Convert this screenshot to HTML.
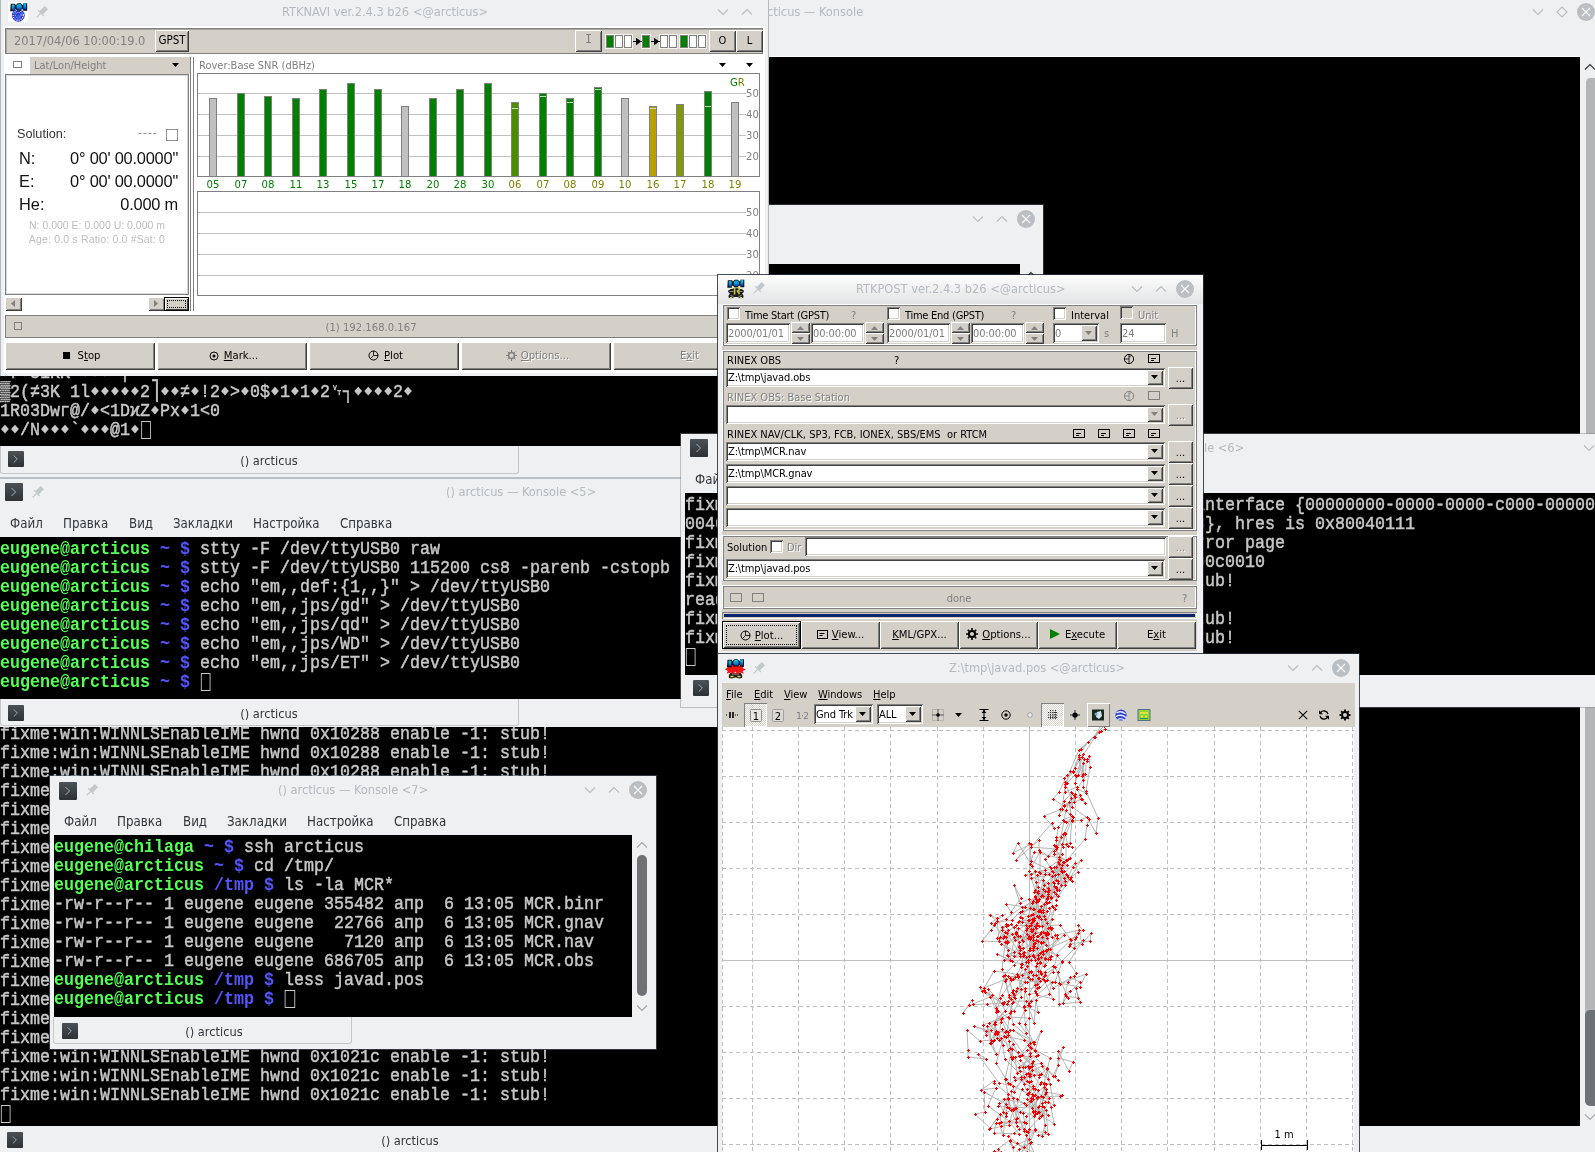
<!DOCTYPE html>
<html lang="ru"><head><meta charset="utf-8"><title>desktop</title>
<style>
*{box-sizing:border-box;margin:0;padding:0}
html,body{width:1595px;height:1152px;overflow:hidden;background:#eff0f1}
body{position:relative;opacity:.9999;font-family:"DejaVu Sans","Liberation Sans",sans-serif;font-size:13px;color:#232629}
.a{position:absolute}
.win{position:absolute;background:#eff0f1;overflow:hidden}
.kt{position:absolute;font:12.7px "DejaVu Sans Condensed","DejaVu Sans","Liberation Sans",sans-serif;font-stretch:condensed;color:#b5bbc0;white-space:nowrap}
.menu{position:absolute;font:13.2px "DejaVu Sans Condensed","DejaVu Sans","Liberation Sans",sans-serif;font-stretch:condensed;color:#31363b;white-space:nowrap}
.menu span{position:absolute;top:0}
.tabtxt{position:absolute;font:12.7px "DejaVu Sans Condensed","DejaVu Sans","Liberation Sans",sans-serif;font-stretch:condensed;color:#31363b;white-space:nowrap}
.term{position:absolute;background:#000;overflow:hidden}
.term pre{position:absolute;left:0;top:0;font:19px/19px "Liberation Mono","DejaVu Sans Mono",monospace;color:#c8c8c8;transform:scaleX(.8771);transform-origin:0 0;-webkit-text-stroke:.5px;white-space:pre}
.term pre b{font-weight:bold;-webkit-text-stroke:0}
.q{display:inline-block;width:11.4px;text-align:center;font:15px/10px "DejaVu Sans Mono","DejaVu Sans",monospace;-webkit-text-stroke:0;vertical-align:0px;overflow:hidden;height:12px}
.g{color:#54ff54}.bl{color:#5454ff}
.cur{display:inline-block;width:11.4px;height:18px;border:1.2px solid #c8c8c8;vertical-align:-4px;margin-left:1px}
.w{font:11px "DejaVu Sans Condensed","DejaVu Sans","Liberation Sans",sans-serif;font-stretch:condensed;color:#000;white-space:pre}
.face{background:#d4d0c8}
.raised{background:#d4d0c8;box-shadow:inset 1px 1px 0 #fff,inset -1px -1px 0 #404040,inset 2px 2px 0 #d4d0c8,inset -2px -2px 0 #808080}
.sunken{background:#fff;box-shadow:inset 1px 1px 0 #808080,inset -1px -1px 0 #fff,inset 2px 2px 0 #404040,inset -2px -2px 0 #d4d0c8}
.pnl{background:#d4d0c8;box-shadow:inset 1px 1px 0 #808080,inset -1px -1px 0 #fff}
.btn{position:absolute;text-align:center}
.dis{color:#808080;text-shadow:1px 1px 0 #fff}
u{text-decoration:underline;text-underline-offset:1px}
svg{position:absolute;overflow:visible}
</style></head><body>
<svg width="0" height="0" style="position:absolute"><defs>
<linearGradient id="cy" x1="0" y1="0" x2="0" y2="1"><stop offset="0" stop-color="#08c4f4"/><stop offset=".55" stop-color="#0a8fe0"/><stop offset="1" stop-color="#0a2fb0"/></linearGradient>
</defs></svg>

<div class="win" style="left:0;top:0;width:1595px;height:479px">
<div class="kt" style="left:743px;top:4px">() arcticus — Konsole</div>
<svg class="a" style="left:1532px;top:6px" width="12" height="12"><path d="M1 3.5 L6 8.5 L11 3.5" fill="none" stroke="#b8bec3" stroke-width="1.1"/></svg><svg class="a" style="left:1556px;top:6px" width="12" height="12"><path d="M6 1 L11 6 L6 11 L1 6 Z" fill="none" stroke="#b8bec3" stroke-width="1.1"/></svg><svg class="a" style="left:1577px;top:3px" width="18" height="18"><circle cx="9" cy="9" r="9" fill="#b9bfc3"/><path d="M5 5 L13 13 M13 5 L5 13" stroke="#fcfcfc" stroke-width="1.2" fill="none"/></svg>
<div class="a" style="left:0;top:56px;width:1580px;height:1px;background:#fff"></div>
<div class="term" style="left:0px;top:57px;width:1580px;height:389px;"><pre style="top:3px;left:0px">
















<span class="q">◆</span>r<span class="q">◆</span>51RK <span class="q">◆</span><span class="q">◆</span><span class="q">◆</span> ¦
▒2(≠3K 1l<span class="q">◆</span><span class="q">◆</span><span class="q">◆</span><span class="q">◆</span><span class="q">◆</span>2⎤<span class="q">◆</span><span class="q">◆</span>≠<span class="q">◆</span>!2<span class="q">◆</span>&gt;<span class="q">◆</span>0$<span class="q">◆</span>1<span class="q">◆</span>1<span class="q">◆</span>2␋┐<span class="q">◆</span><span class="q">◆</span><span class="q">◆</span><span class="q">◆</span>2<span class="q">◆</span>
1R03Dwг@/<span class="q">◆</span>&lt;1DϰZ<span class="q">◆</span>Px<span class="q">◆</span>1&lt;0
<span class="q">◆</span><span class="q">◆</span>/N<span class="q">◆</span><span class="q">◆</span><span class="q">◆</span>`<span class="q">◆</span><span class="q">◆</span><span class="q">◆</span>@1<span class="q">◆</span><span class="cur"></span></pre></div>
<div class="a" style="left:1580px;top:57px;width:15px;height:389px;background:#eff0f1"></div>
<svg class="a" style="left:1584px;top:61px" width="12" height="12"><path d="M1 8.5 L6 3.5 L11 8.5" fill="none" stroke="#31363b" stroke-width="1.2"/></svg>
<div class="a" style="left:1586px;top:78px;width:9px;height:368px;border-radius:4.5px 0 0 4.5px;background:#b4b5b6"></div>
<div class="a" style="left:0;top:446px;width:519px;height:28px;border:1px solid #c3c7ca;border-top:none;border-radius:0 0 3px 3px"></div>
<svg class="a" style="left:8px;top:451px" width="16" height="16" viewBox="0 0 18 18"><defs><linearGradient id="kg8_451" x1="0" y1="0" x2="0" y2="1"><stop offset="0" stop-color="#4a5258"/><stop offset="1" stop-color="#2c3236"/></linearGradient></defs><rect width="18" height="18" rx="1" fill="url(#kg8_451)"/><path d="M6.5 5 L10.5 9 L6.5 13" fill="none" stroke="#aab3b7" stroke-width="1"/></svg>
<div class="tabtxt" style="left:169px;top:453px;width:200px;text-align:center">() arcticus</div>
</div>
<div class="win" style="left:0;top:640px;width:1595px;height:512px">
<div class="term" style="left:0px;top:63px;width:1580px;height:423px;"><pre style="top:3px;left:0px">fixme:win:WINNLSEnableIME hwnd 0x10288 enable -1: stub!
fixme:win:WINNLSEnableIME hwnd 0x10288 enable -1: stub!
fixme:win:WINNLSEnableIME hwnd 0x10288 enable -1: stub!
fixme:win:WINNLSEnableIME hwnd 0x10288 enable -1: stub!
fixme:win:WINNLSEnableIME hwnd 0x10288 enable -1: stub!
fixme:win:WINNLSEnableIME hwnd 0x10288 enable -1: stub!
fixme:win:WINNLSEnableIME hwnd 0x10288 enable -1: stub!
fixme:win:WINNLSEnableIME hwnd 0x10288 enable -1: stub!
fixme:win:WINNLSEnableIME hwnd 0x10288 enable -1: stub!
fixme:win:WINNLSEnableIME hwnd 0x10288 enable -1: stub!
fixme:win:WINNLSEnableIME hwnd 0x10288 enable -1: stub!
fixme:win:WINNLSEnableIME hwnd 0x10288 enable -1: stub!
fixme:win:WINNLSEnableIME hwnd 0x10288 enable -1: stub!
fixme:win:WINNLSEnableIME hwnd 0x10288 enable -1: stub!
fixme:win:WINNLSEnableIME hwnd 0x10288 enable -1: stub!
fixme:win:WINNLSEnableIME hwnd 0x10288 enable -1: stub!
fixme:win:WINNLSEnableIME hwnd 0x10288 enable -1: stub!
fixme:win:WINNLSEnableIME hwnd 0x10288 enable -1: stub!
fixme:win:WINNLSEnableIME hwnd 0x1021c enable -1: stub!
fixme:win:WINNLSEnableIME hwnd 0x1021c enable -1: stub!
fixme:win:WINNLSEnableIME hwnd 0x1021c enable -1: stub!
<span class="cur"></span></pre></div>
<div class="a" style="left:1585px;top:63px;width:10px;height:380px;background:#b4b5b6"></div>
<div class="a" style="left:1585px;top:370px;width:10px;height:96px;border-radius:5px 0 0 5px;background:#6e7276"></div>
<svg class="a" style="left:1584px;top:471px" width="12" height="12"><path d="M1 3.5 L6 8.5 L11 3.5" fill="none" stroke="#a9adb0" stroke-width="1.2"/></svg>
<div class="a" style="left:-1px;top:486px;width:822px;height:30px;border:1px solid #c3c7ca;border-top:none"></div>
<svg class="a" style="left:7px;top:492px" width="16" height="16" viewBox="0 0 18 18"><defs><linearGradient id="kg7_492" x1="0" y1="0" x2="0" y2="1"><stop offset="0" stop-color="#4a5258"/><stop offset="1" stop-color="#2c3236"/></linearGradient></defs><rect width="18" height="18" rx="1" fill="url(#kg7_492)"/><path d="M6.5 5 L10.5 9 L6.5 13" fill="none" stroke="#aab3b7" stroke-width="1"/></svg>
<div class="tabtxt" style="left:310px;top:493px;width:200px;text-align:center">() arcticus</div>
</div>
<div class="win" style="left:0;top:477px;width:1040px;height:250px">
<div class="a" style="left:0;top:0;width:1040px;height:2px;background:#b8c0c6"></div>
<svg class="a" style="left:5px;top:6px" width="18" height="18" viewBox="0 0 18 18"><defs><linearGradient id="kg5_6" x1="0" y1="0" x2="0" y2="1"><stop offset="0" stop-color="#4a5258"/><stop offset="1" stop-color="#2c3236"/></linearGradient></defs><rect width="18" height="18" rx="1" fill="url(#kg5_6)"/><path d="M6.5 5 L10.5 9 L6.5 13" fill="none" stroke="#aab3b7" stroke-width="1"/></svg><svg class="a" style="left:29px;top:6px" width="18" height="18" viewBox="-9 -9 18 18"><g transform="rotate(45)" fill="#c3c8cb"><rect x="-2.3" y="-6.2" width="4.6" height="7.4"/><rect x="-4.1" y=".9" width="8.2" height="1.2"/><rect x="-.55" y="2" width="1.1" height="5.6"/></g></svg>
<div class="kt" style="left:446px;top:7px">() arcticus — Konsole &lt;5&gt;</div>
<div class="menu" style="left:0;top:39px"><span style="left:10px">Файл</span><span style="left:63px">Правка</span><span style="left:129px">Вид</span><span style="left:173px">Закладки</span><span style="left:253px">Настройка</span><span style="left:340px">Справка</span></div>
<div class="term" style="left:0px;top:60px;width:1025px;height:162px;"><pre style="top:3px;left:0px"><b class="g">eugene@arcticus</b> <b class="bl">~ $</b> stty -F /dev/ttyUSB0 raw
<b class="g">eugene@arcticus</b> <b class="bl">~ $</b> stty -F /dev/ttyUSB0 115200 cs8 -parenb -cstopb
<b class="g">eugene@arcticus</b> <b class="bl">~ $</b> echo "em,,def:{1,,}" &gt; /dev/ttyUSB0
<b class="g">eugene@arcticus</b> <b class="bl">~ $</b> echo "em,,jps/gd" &gt; /dev/ttyUSB0
<b class="g">eugene@arcticus</b> <b class="bl">~ $</b> echo "em,,jps/qd" &gt; /dev/ttyUSB0
<b class="g">eugene@arcticus</b> <b class="bl">~ $</b> echo "em,,jps/WD" &gt; /dev/ttyUSB0
<b class="g">eugene@arcticus</b> <b class="bl">~ $</b> echo "em,,jps/ET" &gt; /dev/ttyUSB0
<b class="g">eugene@arcticus</b> <b class="bl">~ $</b> <span class="cur"></span></pre></div>
<div class="a" style="left:0;top:222px;width:519px;height:27px;border:1px solid #c3c7ca;border-top:none;border-radius:0 0 3px 3px"></div>
<svg class="a" style="left:8px;top:228px" width="16" height="16" viewBox="0 0 18 18"><defs><linearGradient id="kg8_228" x1="0" y1="0" x2="0" y2="1"><stop offset="0" stop-color="#4a5258"/><stop offset="1" stop-color="#2c3236"/></linearGradient></defs><rect width="18" height="18" rx="1" fill="url(#kg8_228)"/><path d="M6.5 5 L10.5 9 L6.5 13" fill="none" stroke="#aab3b7" stroke-width="1"/></svg>
<div class="tabtxt" style="left:169px;top:229px;width:200px;text-align:center">() arcticus</div>
</div>
<div class="win" style="left:681px;top:434px;width:960px;height:273px;box-shadow:0 0 0 1px rgba(120,130,140,.45)">
<svg class="a" style="left:9px;top:5px" width="18" height="18" viewBox="0 0 18 18"><defs><linearGradient id="kg9_5" x1="0" y1="0" x2="0" y2="1"><stop offset="0" stop-color="#4a5258"/><stop offset="1" stop-color="#2c3236"/></linearGradient></defs><rect width="18" height="18" rx="1" fill="url(#kg9_5)"/><path d="M6.5 5 L10.5 9 L6.5 13" fill="none" stroke="#aab3b7" stroke-width="1"/></svg>
<div class="kt" style="left:413px;top:6px">() arcticus — Konsole &lt;6&gt;</div>
<svg class="a" style="left:902px;top:8px" width="12" height="12"><path d="M1 3.5 L6 8.5 L11 3.5" fill="none" stroke="#b8bec3" stroke-width="1.1"/></svg>
<div class="menu" style="left:0;top:38px"><span style="left:14px">Файл</span><span style="left:67px">Правка</span></div>
<div class="term" style="left:4px;top:59px;width:956px;height:182px;"><pre style="top:3px;left:0px">fixme:ole:CoCreateInstance no instance created for interface {00000000-0000-0000-c000-00000000
0046} of class {25336920-03f9-11cf-8fd0-00aa00686f13}, hres is 0x80040111
fixme:mshtml:nsChannel_OnStopRequest unsupported: error page
fixme:imm:ImmReleaseContext (0x10288, 0x157cc0): 0x00c0010
fixme:win:WINNLSEnableIME hwnd 0x10288 enable -1: stub!
readobs : rinex obs files ok
fixme:win:WINNLSEnableIME hwnd 0x10288 enable -1: stub!
fixme:win:WINNLSEnableIME hwnd 0x10288 enable -1: stub!
<span class="cur"></span></pre></div>
<svg class="a" style="left:12px;top:246px" width="16" height="16" viewBox="0 0 18 18"><defs><linearGradient id="kg12_246" x1="0" y1="0" x2="0" y2="1"><stop offset="0" stop-color="#4a5258"/><stop offset="1" stop-color="#2c3236"/></linearGradient></defs><rect width="18" height="18" rx="1" fill="url(#kg12_246)"/><path d="M6.5 5 L10.5 9 L6.5 13" fill="none" stroke="#aab3b7" stroke-width="1"/></svg>
</div>
<div class="win" style="left:600px;top:205px;width:443px;height:120px;box-shadow:0 0 0 1px rgba(120,130,140,.35)">
<svg class="a" style="left:372px;top:8px" width="12" height="12"><path d="M1 3.5 L6 8.5 L11 3.5" fill="none" stroke="#b8bec3" stroke-width="1.1"/></svg><svg class="a" style="left:396px;top:8px" width="12" height="12"><path d="M1 8.5 L6 3.5 L11 8.5" fill="none" stroke="#b8bec3" stroke-width="1.1"/></svg><svg class="a" style="left:417px;top:5px" width="18" height="18"><circle cx="9" cy="9" r="9" fill="#b9bfc3"/><path d="M5 5 L13 13 M13 5 L5 13" stroke="#fcfcfc" stroke-width="1.2" fill="none"/></svg>
<div class="a" style="left:0;top:59px;width:420px;height:70px;background:#000"></div>
<svg class="a" style="left:425px;top:64px" width="12" height="12"><path d="M1 8.5 L6 3.5 L11 8.5" fill="none" stroke="#31363b" stroke-width="1.2"/></svg>
</div>
<div class="win" style="left:0;top:0;width:769px;height:376px">
<div class="a" style="left:4px;top:26px;width:761px;height:347px;background:#fff"></div>
<div class="a" style="left:0;top:0;width:1px;height:376px;background:#b3bbc2"></div>
<div class="a" style="left:768px;top:0;width:1px;height:376px;background:#b3bbc2"></div>
<svg class="a" style="left:8px;top:2px" width="20" height="20" viewBox="0 0 20 20"><rect width="20" height="20" fill="#fefefe"/>
<circle cx="10.3" cy="13.3" r="6.4" fill="#2a34c8"/><circle cx="10.3" cy="13.3" r="5" fill="none" stroke="#e9ecff" stroke-width="1.5" stroke-dasharray="1 1.1"/><circle cx="10.3" cy="13.3" r="2.8" fill="none" stroke="#dfe4ff" stroke-width="1" stroke-dasharray="1 1"/>
<circle cx="6.5" cy="11" r="1.3" fill="#2f6bff"/><circle cx="14" cy="11" r="1.3" fill="#2f6bff"/><circle cx="10.5" cy="14" r="1.5" fill="#2f6bff"/><circle cx="7.3" cy="17" r="1.2" fill="#2f6bff"/>
<g transform="translate(2.2 .3)"><path d="M.5 1.5 h4.5 v1 h1 l1.5-1.5 h3 l1.5 1.5 h1 v-1.5 h4 v7.5 h-4 v-1.5 h-1.5 l-1 1.5 h-3.5 l-1-1.5 h-1.5 v2 h-4.5z" fill="#0b140c"/><rect x="1.5" y="2.3" width="2.8" height="5.6" rx="1" fill="url(#cy)"/><ellipse cx="9" cy="4.6" rx="2.7" ry="3" fill="url(#cy)"/><rect x="13.2" y="1" width="2.8" height="6.2" rx="1" fill="url(#cy)"/></g></svg>
<svg class="a" style="left:33px;top:3px" width="18" height="18" viewBox="-9 -9 18 18"><g transform="rotate(45)" fill="#c3c8cb"><rect x="-2.3" y="-6.2" width="4.6" height="7.4"/><rect x="-4.1" y=".9" width="8.2" height="1.2"/><rect x="-.55" y="2" width="1.1" height="5.6"/></g></svg>
<div class="kt" style="left:282px;top:4px">RTKNAVI ver.2.4.3 b26 &lt;@arcticus&gt;</div>
<svg class="a" style="left:717px;top:6px" width="12" height="12"><path d="M1 3.5 L6 8.5 L11 3.5" fill="none" stroke="#b8bec3" stroke-width="1.1"/></svg><svg class="a" style="left:741px;top:6px" width="12" height="12"><path d="M1 8.5 L6 3.5 L11 8.5" fill="none" stroke="#b8bec3" stroke-width="1.1"/></svg>
<div class="a face" style="left:5px;top:28px;width:758px;height:26px;border:1px solid #808080;box-shadow:inset 1px 1px 0 #a9a6a0"></div>
<div class="a w" style="left:14px;top:34px;font-size:11.4px;font-stretch:normal;font-family:'DejaVu Sans',sans-serif;color:#808080">2017/04/06 10:00:19.0</div>
<div class="btn raised w" style="left:155px;top:30px;width:34px;height:22px;line-height:21px;font-size:11.5px">GPST</div>
<div class="btn raised w" style="left:575px;top:30px;width:27px;height:22px;line-height:21px;color:#808080;font-family:'Liberation Mono',monospace;font-size:12px">I</div>
<div class="btn raised w" style="left:709px;top:30px;width:27px;height:22px;line-height:21px">O</div>
<div class="btn raised w" style="left:736px;top:30px;width:27px;height:22px;line-height:21px">L</div>
<div class="a" style="left:606px;top:35px;width:8px;height:13px;background:#008000;border:1px solid #808080;box-shadow:0 0 0 1px #f4f3f0"></div>
<div class="a" style="left:615px;top:35px;width:8px;height:13px;background:#fff;border:1px solid #808080;box-shadow:0 0 0 1px #f4f3f0"></div>
<div class="a" style="left:624px;top:35px;width:8px;height:13px;background:#fff;border:1px solid #808080;box-shadow:0 0 0 1px #f4f3f0"></div>
<div class="a" style="left:642px;top:35px;width:8px;height:13px;background:#008000;border:1px solid #808080;box-shadow:0 0 0 1px #f4f3f0"></div>
<div class="a" style="left:660px;top:35px;width:8px;height:13px;background:#fff;border:1px solid #808080;box-shadow:0 0 0 1px #f4f3f0"></div>
<div class="a" style="left:669px;top:35px;width:8px;height:13px;background:#fff;border:1px solid #808080;box-shadow:0 0 0 1px #f4f3f0"></div>
<div class="a" style="left:680px;top:35px;width:8px;height:13px;background:#008000;border:1px solid #808080;box-shadow:0 0 0 1px #f4f3f0"></div>
<div class="a" style="left:689px;top:35px;width:8px;height:13px;background:#fff;border:1px solid #808080;box-shadow:0 0 0 1px #f4f3f0"></div>
<div class="a" style="left:698px;top:35px;width:8px;height:13px;background:#fff;border:1px solid #808080;box-shadow:0 0 0 1px #f4f3f0"></div>
<svg class="a" style="left:633px;top:37px" width="9" height="9"><path d="M0 4.5 H9 M3.5 1.5 L7.5 4.5 L3.5 7.5 Z" stroke="#000" stroke-width="1" fill="#000"/></svg>
<svg class="a" style="left:651px;top:37px" width="9" height="9"><path d="M0 4.5 H9 M3.5 1.5 L7.5 4.5 L3.5 7.5 Z" stroke="#000" stroke-width="1" fill="#000"/></svg>
<svg class="a" style="left:13px;top:61px" width="10" height="8"><rect x=".5" y=".5" width="8" height="6" fill="none" stroke="#000" stroke-dasharray="1 1"/></svg>
<div class="a face" style="left:30px;top:57px;width:160px;height:17px"></div>
<div class="a w" style="left:34px;top:59px;font-size:11px;color:#808080">Lat/Lon/Height</div>
<svg class="a" style="left:172px;top:63px" width="7" height="4"><path d="M0 0 H7 L3.5 4 Z" fill="#000"/></svg>
<div class="a" style="left:5px;top:74px;width:184px;height:221px;background:#fff;border:1px solid #808080;box-shadow:inset 0 0 0 1px #d8d8d8"></div>
<div class="a" style="left:17px;top:127px;font-family:'Liberation Sans',sans-serif;font-size:12.7px;color:#333;white-space:nowrap">Solution:</div>
<div class="a" style="left:138px;top:126px;font-family:'Liberation Sans',sans-serif;font-size:12.7px;color:#909090;white-space:nowrap;letter-spacing:.6px">----</div>
<div class="a" style="left:166px;top:129px;width:12px;height:12px;border:1px solid #909090;background:#fff"></div>
<div class="a" style="left:19px;top:149px;font-family:'Liberation Sans',sans-serif;font-size:16.4px;color:#111;white-space:nowrap">N:</div>
<div class="a" style="left:40px;width:138px;text-align:right;top:149px;font-family:'Liberation Sans',sans-serif;font-size:16.4px;letter-spacing:-.22px;color:#111;white-space:nowrap">0° 00' 00.0000"</div>
<div class="a" style="left:19px;top:172px;font-family:'Liberation Sans',sans-serif;font-size:16.4px;color:#111;white-space:nowrap">E:</div>
<div class="a" style="left:40px;width:138px;text-align:right;top:172px;font-family:'Liberation Sans',sans-serif;font-size:16.4px;letter-spacing:-.22px;color:#111;white-space:nowrap">0° 00' 00.0000"</div>
<div class="a" style="left:19px;top:195px;font-family:'Liberation Sans',sans-serif;font-size:16.4px;color:#111;white-space:nowrap">He:</div>
<div class="a" style="left:40px;width:138px;text-align:right;top:195px;font-family:'Liberation Sans',sans-serif;font-size:16.4px;letter-spacing:-.22px;color:#111;white-space:nowrap">0.000 m</div>
<div class="a" style="left:5px;width:184px;text-align:center;top:219px;font-family:'Liberation Sans',sans-serif;font-size:10.5px;color:#bdbdbd;white-space:nowrap">N: 0.000 E: 0.000 U: 0.000 m</div>
<div class="a" style="left:5px;width:184px;text-align:center;top:233px;font-family:'Liberation Sans',sans-serif;font-size:10.5px;color:#bdbdbd;white-space:nowrap;letter-spacing:.17px">Age: 0.0 s Ratio: 0.0 #Sat: 0</div>
<div class="a raised" style="left:5px;top:297px;width:17px;height:14px"></div><svg class="a" style="left:11px;top:300px" width="4" height="7"><path d="M4 0 V7 L0 3.5 Z" fill="#808080"/></svg>
<div class="a raised" style="left:148px;top:297px;width:17px;height:14px"></div><svg class="a" style="left:154px;top:300px" width="4" height="7"><path d="M0 0 V7 L4 3.5 Z" fill="#808080"/></svg>
<div class="a face" style="left:164px;top:297px;width:25px;height:14px;border:1px solid #000;box-shadow:inset 1px 1px 0 #fff,inset -1px -1px 0 #404040"></div><div class="a" style="left:167px;top:300px;width:19px;height:8px;border:1px dotted #000"></div>
<div class="a" style="left:190px;top:57px;width:1px;height:254px;background:#808080"></div><div class="a" style="left:193px;top:57px;width:1px;height:254px;background:#808080"></div>
<div class="a w" style="left:199px;top:59px;color:#808080;font-size:11px">Rover:Base SNR (dBHz)</div>
<svg class="a" style="left:719px;top:63px" width="7" height="4"><path d="M0 0 H7 L3.5 4 Z" fill="#000"/></svg>
<svg class="a" style="left:746px;top:63px" width="7" height="4"><path d="M0 0 H7 L3.5 4 Z" fill="#000"/></svg>
<div class="a" style="left:197px;top:73px;width:563px;height:104px;background:#fff;border:1px solid #808080"></div>
<svg class="a" style="left:0;top:0" width="768" height="376" viewBox="0 0 768 376" shape-rendering="crispEdges"><path d="M198 93.5 H746" stroke="#c0c0c0" stroke-width="1"/><path d="M198 114.5 H746" stroke="#c0c0c0" stroke-width="1"/><path d="M198 135.5 H746" stroke="#c0c0c0" stroke-width="1"/><path d="M198 156.5 H746" stroke="#c0c0c0" stroke-width="1"/><path d="M198 212.5 H746" stroke="#c0c0c0" stroke-width="1"/><path d="M198 233.5 H746" stroke="#c0c0c0" stroke-width="1"/><path d="M198 254.5 H746" stroke="#c0c0c0" stroke-width="1"/><path d="M198 275.5 H746" stroke="#c0c0c0" stroke-width="1"/><rect x="209.5" y="98.5" width="7" height="78" fill="#c0c0c0" stroke="#808080" stroke-width="1"/><rect x="237.5" y="93.5" width="7" height="83" fill="#008000" stroke="#808080" stroke-width="1"/><rect x="264.5" y="96.5" width="7" height="80" fill="#008000" stroke="#808080" stroke-width="1"/><rect x="292.5" y="98.5" width="7" height="78" fill="#008000" stroke="#808080" stroke-width="1"/><rect x="319.5" y="89.5" width="7" height="87" fill="#008000" stroke="#808080" stroke-width="1"/><rect x="347.5" y="83.5" width="7" height="93" fill="#008000" stroke="#808080" stroke-width="1"/><rect x="374.5" y="89.5" width="7" height="87" fill="#008000" stroke="#808080" stroke-width="1"/><rect x="401.5" y="106.5" width="7" height="70" fill="#c0c0c0" stroke="#808080" stroke-width="1"/><rect x="429.5" y="98.5" width="7" height="78" fill="#008000" stroke="#808080" stroke-width="1"/><rect x="456.5" y="89.5" width="7" height="87" fill="#008000" stroke="#808080" stroke-width="1"/><rect x="484.5" y="83.5" width="7" height="93" fill="#008000" stroke="#808080" stroke-width="1"/><rect x="511.5" y="102.5" width="7" height="74" fill="#4c8c00" stroke="#808080" stroke-width="1"/><path d="M512 108.5 H518" stroke="#c8d8c0" stroke-width="1"/><rect x="539.5" y="93.5" width="7" height="83" fill="#008000" stroke="#808080" stroke-width="1"/><path d="M540 96.5 H546" stroke="#c8d8c0" stroke-width="1"/><rect x="566.5" y="98.5" width="7" height="78" fill="#008000" stroke="#808080" stroke-width="1"/><path d="M567 102.5 H573" stroke="#c8d8c0" stroke-width="1"/><rect x="594.5" y="87.5" width="7" height="89" fill="#008000" stroke="#808080" stroke-width="1"/><path d="M595 89.5 H601" stroke="#c8d8c0" stroke-width="1"/><rect x="621.5" y="98.5" width="7" height="78" fill="#c0c0c0" stroke="#808080" stroke-width="1"/><rect x="649.5" y="106.5" width="7" height="70" fill="#b8a000" stroke="#808080" stroke-width="1"/><path d="M650 108.5 H656" stroke="#c8d8c0" stroke-width="1"/><rect x="676.5" y="104.5" width="7" height="72" fill="#80980a" stroke="#808080" stroke-width="1"/><rect x="704.5" y="91.5" width="7" height="85" fill="#008000" stroke="#808080" stroke-width="1"/><path d="M705 106.5 H711" stroke="#c8d8c0" stroke-width="1"/><rect x="731.5" y="102.5" width="7" height="74" fill="#c0c0c0" stroke="#808080" stroke-width="1"/></svg>
<div class="a w" style="left:201px;top:178px;width:24px;text-align:center;color:#008000;font-size:11.2px">05</div><div class="a w" style="left:229px;top:178px;width:24px;text-align:center;color:#008000;font-size:11.2px">07</div><div class="a w" style="left:256px;top:178px;width:24px;text-align:center;color:#008000;font-size:11.2px">08</div><div class="a w" style="left:284px;top:178px;width:24px;text-align:center;color:#008000;font-size:11.2px">11</div><div class="a w" style="left:311px;top:178px;width:24px;text-align:center;color:#008000;font-size:11.2px">13</div><div class="a w" style="left:339px;top:178px;width:24px;text-align:center;color:#008000;font-size:11.2px">15</div><div class="a w" style="left:366px;top:178px;width:24px;text-align:center;color:#008000;font-size:11.2px">17</div><div class="a w" style="left:393px;top:178px;width:24px;text-align:center;color:#008000;font-size:11.2px">18</div><div class="a w" style="left:421px;top:178px;width:24px;text-align:center;color:#008000;font-size:11.2px">20</div><div class="a w" style="left:448px;top:178px;width:24px;text-align:center;color:#008000;font-size:11.2px">28</div><div class="a w" style="left:476px;top:178px;width:24px;text-align:center;color:#008000;font-size:11.2px">30</div><div class="a w" style="left:503px;top:178px;width:24px;text-align:center;color:#808000;font-size:11.2px">06</div><div class="a w" style="left:531px;top:178px;width:24px;text-align:center;color:#808000;font-size:11.2px">07</div><div class="a w" style="left:558px;top:178px;width:24px;text-align:center;color:#808000;font-size:11.2px">08</div><div class="a w" style="left:586px;top:178px;width:24px;text-align:center;color:#808000;font-size:11.2px">09</div><div class="a w" style="left:613px;top:178px;width:24px;text-align:center;color:#808000;font-size:11.2px">10</div><div class="a w" style="left:641px;top:178px;width:24px;text-align:center;color:#808000;font-size:11.2px">16</div><div class="a w" style="left:668px;top:178px;width:24px;text-align:center;color:#808000;font-size:11.2px">17</div><div class="a w" style="left:696px;top:178px;width:24px;text-align:center;color:#808000;font-size:11.2px">18</div><div class="a w" style="left:723px;top:178px;width:24px;text-align:center;color:#808000;font-size:11.2px">19</div>
<div class="a w" style="left:730px;top:76px;font-size:11.2px"><span style="color:#008000">G</span><span style="color:#808000">R</span></div>
<div class="a w" style="left:746px;top:88px;height:12px;line-height:12px;color:#808080;font-size:11.2px;background:#fff">50</div>
<div class="a w" style="left:746px;top:109px;height:12px;line-height:12px;color:#808080;font-size:11.2px;background:#fff">40</div>
<div class="a w" style="left:746px;top:130px;height:12px;line-height:12px;color:#808080;font-size:11.2px;background:#fff">30</div>
<div class="a w" style="left:746px;top:151px;height:12px;line-height:12px;color:#808080;font-size:11.2px;background:#fff">20</div>
<div class="a" style="left:197px;top:191px;width:563px;height:105px;border:1px solid #808080"></div>
<div class="a w" style="left:746px;top:207px;height:12px;line-height:12px;color:#808080;font-size:11.2px;background:#fff">50</div>
<div class="a w" style="left:746px;top:228px;height:12px;line-height:12px;color:#808080;font-size:11.2px;background:#fff">40</div>
<div class="a w" style="left:746px;top:249px;height:12px;line-height:12px;color:#808080;font-size:11.2px;background:#fff">30</div>
<div class="a w" style="left:746px;top:270px;height:12px;line-height:12px;color:#808080;font-size:11.2px;background:#fff">20</div>
<div class="a face" style="left:5px;top:315px;width:758px;height:23px;border:1px solid #808080"></div>
<div class="a" style="left:14px;top:322px;width:8px;height:8px;border:1px solid #808080"></div>
<div class="a w" style="left:271px;top:321px;width:200px;text-align:center;color:#808080;font-size:11.2px">(1) 192.168.0.167</div>
<div class="btn raised w" style="left:5px;top:342px;width:150px;height:28px;line-height:28px;font-size:11.2px;padding-left:3px"><span style="display:inline-block;width:7px;height:7px;background:#000;margin-right:8px"></span>S<u>t</u>op</div>
<div class="btn raised w" style="left:157px;top:342px;width:150px;height:28px;line-height:28px;font-size:11.2px;padding-left:3px"><svg style="position:static;vertical-align:-2px;margin-right:5px" width="10" height="10"><circle cx="5" cy="5" r="4" fill="none" stroke="#000"/><circle cx="5" cy="5" r="1.5"/></svg><u>M</u>ark...</div>
<div class="btn raised w" style="left:309px;top:342px;width:150px;height:28px;line-height:28px;font-size:11.2px;padding-left:3px"><svg style="position:static;vertical-align:-2px;margin-right:5px" width="11" height="11"><circle cx="5.5" cy="5.5" r="4.5" fill="none" stroke="#000"/><path d="M5.5 1 V5.5 H10 M5.5 5.5 L2.5 8.5" stroke="#000" fill="none" stroke-width=".8"/></svg><u>P</u>lot</div>
<div class="btn raised w dis" style="left:461px;top:342px;width:150px;height:28px;line-height:28px;font-size:11.2px;padding-left:3px"><svg style="position:static;vertical-align:-2px;margin-right:4px" width="11" height="11"><circle cx="5.5" cy="5.5" r="3" fill="none" stroke="#808080" stroke-width="1.6" /><path d="M5.5 0 V11 M0 5.5 H11 M1.6 1.6 L9.4 9.4 M9.4 1.6 L1.6 9.4" stroke="#808080" stroke-width="1" stroke-dasharray="2 7"/></svg><u>O</u>ptions...</div>
<div class="btn raised w dis" style="left:613px;top:342px;width:150px;height:28px;line-height:28px;font-size:11.2px;padding-left:3px">E<u>x</u>it</div>
</div>
<div class="win" style="left:50px;top:776px;width:606px;height:273px;box-shadow:0 0 0 1px rgba(90,100,110,.55)">
<svg class="a" style="left:9px;top:6px" width="18" height="18" viewBox="0 0 18 18"><defs><linearGradient id="kg9_6" x1="0" y1="0" x2="0" y2="1"><stop offset="0" stop-color="#4a5258"/><stop offset="1" stop-color="#2c3236"/></linearGradient></defs><rect width="18" height="18" rx="1" fill="url(#kg9_6)"/><path d="M6.5 5 L10.5 9 L6.5 13" fill="none" stroke="#aab3b7" stroke-width="1"/></svg><svg class="a" style="left:33px;top:5px" width="18" height="18" viewBox="-9 -9 18 18"><g transform="rotate(45)" fill="#c3c8cb"><rect x="-2.3" y="-6.2" width="4.6" height="7.4"/><rect x="-4.1" y=".9" width="8.2" height="1.2"/><rect x="-.55" y="2" width="1.1" height="5.6"/></g></svg>
<div class="kt" style="left:228px;top:6px">() arcticus — Konsole &lt;7&gt;</div>
<svg class="a" style="left:534px;top:8px" width="12" height="12"><path d="M1 3.5 L6 8.5 L11 3.5" fill="none" stroke="#b8bec3" stroke-width="1.1"/></svg><svg class="a" style="left:558px;top:8px" width="12" height="12"><path d="M1 8.5 L6 3.5 L11 8.5" fill="none" stroke="#b8bec3" stroke-width="1.1"/></svg><svg class="a" style="left:579px;top:5px" width="18" height="18"><circle cx="9" cy="9" r="9" fill="#b9bfc3"/><path d="M5 5 L13 13 M13 5 L5 13" stroke="#fcfcfc" stroke-width="1.2" fill="none"/></svg>
<div class="menu" style="left:0;top:38px"><span style="left:14px">Файл</span><span style="left:67px">Правка</span><span style="left:133px">Вид</span><span style="left:177px">Закладки</span><span style="left:257px">Настройка</span><span style="left:344px">Справка</span></div>
<div class="term" style="left:4px;top:59px;width:578px;height:182px;"><pre style="top:3px;left:0px"><b class="g">eugene@chilaga</b> <b class="bl">~ $</b> ssh arcticus
<b class="g">eugene@arcticus</b> <b class="bl">~ $</b> cd /tmp/
<b class="g">eugene@arcticus</b> <b class="bl">/tmp $</b> ls -la MCR*
-rw-r--r-- 1 eugene eugene 355482 апр  6 13:05 MCR.binr
-rw-r--r-- 1 eugene eugene  22766 апр  6 13:05 MCR.gnav
-rw-r--r-- 1 eugene eugene   7120 апр  6 13:05 MCR.nav
-rw-r--r-- 1 eugene eugene 686705 апр  6 13:05 MCR.obs
<b class="g">eugene@arcticus</b> <b class="bl">/tmp $</b> less javad.pos
<b class="g">eugene@arcticus</b> <b class="bl">/tmp $</b> <span class="cur"></span></pre></div>
<svg class="a" style="left:586px;top:63px" width="12" height="12"><path d="M1 8.5 L6 3.5 L11 8.5" fill="none" stroke="#a4a9ad" stroke-width="1.2"/></svg>
<div class="a" style="left:587px;top:79px;width:10px;height:141px;border-radius:5px;background:#6e7276"></div>
<svg class="a" style="left:586px;top:226px" width="12" height="12"><path d="M1 3.5 L6 8.5 L11 3.5" fill="none" stroke="#a4a9ad" stroke-width="1.2"/></svg>
<div class="a" style="left:3px;top:241px;width:299px;height:27px;border:1px solid #c3c7ca;border-top:none;border-radius:0 0 3px 3px"></div>
<svg class="a" style="left:12px;top:247px" width="16" height="16" viewBox="0 0 18 18"><defs><linearGradient id="kg12_247" x1="0" y1="0" x2="0" y2="1"><stop offset="0" stop-color="#4a5258"/><stop offset="1" stop-color="#2c3236"/></linearGradient></defs><rect width="18" height="18" rx="1" fill="url(#kg12_247)"/><path d="M6.5 5 L10.5 9 L6.5 13" fill="none" stroke="#aab3b7" stroke-width="1"/></svg>
<div class="tabtxt" style="left:64px;top:248px;width:200px;text-align:center">() arcticus</div>
</div>
<div class="win" style="left:718px;top:275px;width:485px;height:379px;box-shadow:0 0 0 1px rgba(35,45,55,.85)">
<div class="a" style="left:0;top:0;width:485px;height:29px;background:linear-gradient(#fdfdfd,#e2e3e4)"></div>
<svg class="a" style="left:9px;top:3px" width="18" height="21" viewBox="0 0 18 21">
<path d="M1 13 q1-2.5 4-2 l2-1 h4 l2 1 q3-.5 4 2 q-.5 2-2 2.5 q2 1.5 1.5 4 q-3 1.5-6-.5 h-3 q-3 2-6 .5 q-.5-2.500 1.500-4 q-1.500-.5-2-2.500z" fill="#1c1e1a"/>
<path d="M2.500 13.500 h4 M11.500 13.500 h4 M3.500 17.500 l3 1 M11.500 18.500 l3-1" stroke="#8a8a86" stroke-width="1.200"/>
<path d="M7 9.500 h3.500 q1.800 .2 1.800 1.800 q0 1.500-1.800 1.700 l2 3 M7.600 9.500 v7" fill="none" stroke="#d6cc3a" stroke-width="1.500"/>
<path d="M3 19.500 h2 M13 19.500 h2 M2 11.500 h1 M15 11 h1" stroke="#e6dc30" stroke-width="1.200"/>
<g transform="translate(.3 .8)"><path d="M.5 1.5 h4.5 v1 h1 l1.5-1.5 h3 l1.5 1.5 h1 v-1.5 h4 v7.5 h-4 v-1.5 h-1.5 l-1 1.5 h-3.5 l-1-1.5 h-1.5 v2 h-4.5z" fill="#0b140c"/><rect x="1.5" y="2.3" width="2.8" height="5.6" rx="1" fill="url(#cy)"/><ellipse cx="9" cy="4.6" rx="2.7" ry="3" fill="url(#cy)"/><rect x="13.2" y="1" width="2.8" height="6.2" rx="1" fill="url(#cy)"/></g></svg>
<svg class="a" style="left:32px;top:4px" width="18" height="18" viewBox="-9 -9 18 18"><g transform="rotate(45)" fill="#c3c8cb"><rect x="-2.3" y="-6.2" width="4.6" height="7.4"/><rect x="-4.1" y=".9" width="8.2" height="1.2"/><rect x="-.55" y="2" width="1.1" height="5.6"/></g></svg>
<div class="kt" style="left:138px;top:6px">RTKPOST ver.2.4.3 b26 &lt;@arcticus&gt;</div>
<svg class="a" style="left:413px;top:8px" width="12" height="12"><path d="M1 3.5 L6 8.5 L11 3.5" fill="none" stroke="#b8bec3" stroke-width="1.1"/></svg><svg class="a" style="left:437px;top:8px" width="12" height="12"><path d="M1 8.5 L6 3.5 L11 8.5" fill="none" stroke="#b8bec3" stroke-width="1.1"/></svg><svg class="a" style="left:458px;top:5px" width="18" height="18"><circle cx="9" cy="9" r="9" fill="#b9bfc3"/><path d="M5 5 L13 13 M13 5 L5 13" stroke="#fcfcfc" stroke-width="1.2" fill="none"/></svg>
<div class="a face" style="left:4px;top:29px;width:475px;height:347px"></div>
<div class="a face" style="left:4px;top:29px;width:475px;height:42px;box-shadow:inset 1px 1px 0 #fff,inset -1px -1px 0 #808080,inset 2px 2px 0 #808080,inset -2px -2px 0 #fff;"></div><div class="a face" style="left:4px;top:75px;width:475px;height:181px;box-shadow:inset 1px 1px 0 #fff,inset -1px -1px 0 #808080,inset 2px 2px 0 #808080,inset -2px -2px 0 #fff;"></div><div class="a face" style="left:4px;top:260px;width:475px;height:46px;box-shadow:inset 1px 1px 0 #fff,inset -1px -1px 0 #808080,inset 2px 2px 0 #808080,inset -2px -2px 0 #fff;"></div><div class="a face" style="left:4px;top:310px;width:475px;height:24px;box-shadow:inset 1px 1px 0 #fff,inset -1px -1px 0 #808080,inset 2px 2px 0 #808080,inset -2px -2px 0 #fff;"></div>
<div class="a sunken" style="left:9px;top:32px;width:13px;height:13px;background:#fff"></div><div class="a w " style="left:27px;top:34px;letter-spacing:-.25px">Time Start (GPST)</div><div class="a w " style="left:133px;top:34px;color:#808080">?</div>
<div class="a sunken w" style="left:8px;top:48px;width:64px;height:20px;line-height:21px;padding-left:2px;letter-spacing:-.12px;color:#808080;overflow:hidden">2000/01/01</div><div class="a raised" style="left:73px;top:47px;width:19px;height:11px"></div><div class="a raised" style="left:73px;top:58px;width:19px;height:11px"></div><svg class="a" style="left:79px;top:51px" width="7" height="4"><path d="M0 4 H7 L3.5 0 Z" fill="#808080"/></svg><svg class="a" style="left:79px;top:62px" width="7" height="4"><path d="M0 0 H7 L3.5 4 Z" fill="#808080"/></svg><div class="a sunken w" style="left:93px;top:48px;width:53px;height:20px;line-height:21px;padding-left:2px;letter-spacing:-.12px;color:#808080;overflow:hidden">00:00:00</div><div class="a raised" style="left:147px;top:47px;width:19px;height:11px"></div><div class="a raised" style="left:147px;top:58px;width:19px;height:11px"></div><svg class="a" style="left:153px;top:51px" width="7" height="4"><path d="M0 4 H7 L3.5 0 Z" fill="#808080"/></svg><svg class="a" style="left:153px;top:62px" width="7" height="4"><path d="M0 0 H7 L3.5 4 Z" fill="#808080"/></svg>
<div class="a sunken" style="left:169px;top:32px;width:13px;height:13px;background:#fff"></div><div class="a w " style="left:187px;top:34px;letter-spacing:-.25px">Time End (GPST)</div><div class="a w " style="left:293px;top:34px;color:#808080">?</div>
<div class="a sunken w" style="left:169px;top:48px;width:63px;height:20px;line-height:21px;padding-left:2px;letter-spacing:-.12px;color:#808080;overflow:hidden">2000/01/01</div><div class="a raised" style="left:233px;top:47px;width:19px;height:11px"></div><div class="a raised" style="left:233px;top:58px;width:19px;height:11px"></div><svg class="a" style="left:239px;top:51px" width="7" height="4"><path d="M0 4 H7 L3.5 0 Z" fill="#808080"/></svg><svg class="a" style="left:239px;top:62px" width="7" height="4"><path d="M0 0 H7 L3.5 4 Z" fill="#808080"/></svg><div class="a sunken w" style="left:253px;top:48px;width:53px;height:20px;line-height:21px;padding-left:2px;letter-spacing:-.12px;color:#808080;overflow:hidden">00:00:00</div><div class="a raised" style="left:307px;top:47px;width:19px;height:11px"></div><div class="a raised" style="left:307px;top:58px;width:19px;height:11px"></div><svg class="a" style="left:313px;top:51px" width="7" height="4"><path d="M0 4 H7 L3.5 0 Z" fill="#808080"/></svg><svg class="a" style="left:313px;top:62px" width="7" height="4"><path d="M0 0 H7 L3.5 4 Z" fill="#808080"/></svg>
<div class="a sunken" style="left:335px;top:32px;width:13px;height:13px;background:#fff"></div><div class="a w " style="left:353px;top:34px;">Interval</div>
<div class="a sunken" style="left:402px;top:31px;width:13px;height:13px;background:#d4d0c8"></div><div class="a w dis" style="left:420px;top:34px;">Unit</div>
<div class="a sunken w" style="left:335px;top:48px;width:46px;height:20px;line-height:21px;padding-left:2px;letter-spacing:-.12px;color:#808080;overflow:hidden">0</div><div class="a raised" style="left:363px;top:50px;width:16px;height:16px"></div><svg class="a" style="left:367px;top:56px" width="7" height="4"><path d="M0 0 H7 L3.5 4 Z" fill="#808080"/></svg><div class="a w " style="left:386px;top:52px;color:#808080">s</div><div class="a sunken w" style="left:402px;top:48px;width:46px;height:20px;line-height:21px;padding-left:2px;letter-spacing:-.12px;color:#808080;overflow:hidden">24</div><div class="a w " style="left:453px;top:52px;color:#808080">H</div>
<div class="a w " style="left:9px;top:79px;">RINEX OBS</div><div class="a w " style="left:176px;top:79px;">?</div>
<svg class="a" style="left:405px;top:78px" width="12" height="12"><circle cx="6" cy="6" r="4.6" fill="none" stroke="#000" stroke-width="1"/><path d="M6 1.5 V10.5 M1.5 6 H6 M6 4 L8.5 2.5" stroke="#000" stroke-width=".8" fill="none"/></svg><svg class="a" style="left:430px;top:79px" width="12" height="10"><rect x=".5" y=".5" width="11" height="8" fill="none" stroke="#000"/><path d="M3 4.5 H8 M3 6.5 H6" stroke="#000" stroke-width="1"/></svg>
<div class="a sunken w" style="left:8px;top:93px;width:439px;height:19px;line-height:20px;padding-left:2px;letter-spacing:-.12px;color:#000;overflow:hidden">Z:\tmp\javad.obs</div><div class="a raised" style="left:429px;top:95px;width:16px;height:15px"></div><svg class="a" style="left:433px;top:100px" width="7" height="4"><path d="M0 0 H7 L3.5 4 Z" fill="#000"/></svg><div class="btn raised w" style="left:450px;top:92px;width:25px;height:22px;line-height:23px">...</div>
<div class="a w dis" style="left:9px;top:116px;">RINEX OBS: Base Station</div>
<svg class="a" style="left:405px;top:115px" width="12" height="12"><circle cx="6" cy="6" r="4.6" fill="none" stroke="#808080" stroke-width="1"/><path d="M6 1.5 V10.5 M1.5 6 H6 M6 4 L8.5 2.5" stroke="#808080" stroke-width=".8" fill="none"/></svg><svg class="a" style="left:430px;top:116px" width="12" height="10"><rect x=".5" y=".5" width="11" height="8" fill="none" stroke="#808080"/></svg>
<div class="a sunken w" style="left:8px;top:130px;width:439px;height:19px;line-height:20px;padding-left:2px;letter-spacing:-.12px;color:#000;overflow:hidden"></div><div class="a raised" style="left:429px;top:132px;width:16px;height:15px"></div><svg class="a" style="left:433px;top:137px" width="7" height="4"><path d="M0 0 H7 L3.5 4 Z" fill="#808080"/></svg><div class="btn raised w dis" style="left:450px;top:129px;width:25px;height:22px;line-height:23px">...</div>
<div class="a w " style="left:9px;top:153px;">RINEX NAV/CLK, SP3, FCB, IONEX, SBS/EMS  or RTCM</div>
<svg class="a" style="left:355px;top:154px" width="12" height="10"><rect x=".5" y=".5" width="11" height="8" fill="none" stroke="#000"/><path d="M3 4.5 H8 M3 6.5 H6" stroke="#000" stroke-width="1"/></svg><svg class="a" style="left:380px;top:154px" width="12" height="10"><rect x=".5" y=".5" width="11" height="8" fill="none" stroke="#000"/><path d="M3 4.5 H8 M3 6.5 H6" stroke="#000" stroke-width="1"/></svg><svg class="a" style="left:405px;top:154px" width="12" height="10"><rect x=".5" y=".5" width="11" height="8" fill="none" stroke="#000"/><path d="M3 4.5 H8 M3 6.5 H6" stroke="#000" stroke-width="1"/></svg><svg class="a" style="left:430px;top:154px" width="12" height="10"><rect x=".5" y=".5" width="11" height="8" fill="none" stroke="#000"/><path d="M3 4.5 H8 M3 6.5 H6" stroke="#000" stroke-width="1"/></svg>
<div class="a sunken w" style="left:8px;top:167px;width:439px;height:19px;line-height:20px;padding-left:2px;letter-spacing:-.12px;color:#000;overflow:hidden">Z:\tmp\MCR.nav</div><div class="a raised" style="left:429px;top:169px;width:16px;height:15px"></div><svg class="a" style="left:433px;top:174px" width="7" height="4"><path d="M0 0 H7 L3.5 4 Z" fill="#000"/></svg><div class="btn raised w" style="left:450px;top:166px;width:25px;height:22px;line-height:23px">...</div>
<div class="a sunken w" style="left:8px;top:189px;width:439px;height:19px;line-height:20px;padding-left:2px;letter-spacing:-.12px;color:#000;overflow:hidden">Z:\tmp\MCR.gnav</div><div class="a raised" style="left:429px;top:191px;width:16px;height:15px"></div><svg class="a" style="left:433px;top:196px" width="7" height="4"><path d="M0 0 H7 L3.5 4 Z" fill="#000"/></svg><div class="btn raised w" style="left:450px;top:188px;width:25px;height:22px;line-height:23px">...</div>
<div class="a sunken w" style="left:8px;top:211px;width:439px;height:19px;line-height:20px;padding-left:2px;letter-spacing:-.12px;color:#000;overflow:hidden"></div><div class="a raised" style="left:429px;top:213px;width:16px;height:15px"></div><svg class="a" style="left:433px;top:218px" width="7" height="4"><path d="M0 0 H7 L3.5 4 Z" fill="#000"/></svg><div class="btn raised w" style="left:450px;top:210px;width:25px;height:22px;line-height:23px">...</div>
<div class="a sunken w" style="left:8px;top:233px;width:439px;height:19px;line-height:20px;padding-left:2px;letter-spacing:-.12px;color:#000;overflow:hidden"></div><div class="a raised" style="left:429px;top:235px;width:16px;height:15px"></div><svg class="a" style="left:433px;top:240px" width="7" height="4"><path d="M0 0 H7 L3.5 4 Z" fill="#000"/></svg><div class="btn raised w" style="left:450px;top:232px;width:25px;height:22px;line-height:23px">...</div>
<div class="a w " style="left:9px;top:266px;">Solution</div><div class="a sunken" style="left:52px;top:265px;width:13px;height:13px;background:#fff"></div><div class="a w dis" style="left:69px;top:266px;">Dir</div>
<div class="a sunken w" style="left:87px;top:262px;width:361px;height:19px;line-height:20px;padding-left:2px;letter-spacing:-.12px;color:#000;overflow:hidden"></div><div class="btn raised w dis" style="left:450px;top:261px;width:25px;height:22px;line-height:23px">...</div>
<div class="a sunken w" style="left:8px;top:284px;width:439px;height:19px;line-height:20px;padding-left:2px;letter-spacing:-.12px;color:#000;overflow:hidden">Z:\tmp\javad.pos</div><div class="a raised" style="left:429px;top:286px;width:16px;height:15px"></div><svg class="a" style="left:433px;top:291px" width="7" height="4"><path d="M0 0 H7 L3.5 4 Z" fill="#000"/></svg><div class="btn raised w" style="left:450px;top:283px;width:25px;height:22px;line-height:23px">...</div>
<svg class="a" style="left:12px;top:318px" width="12" height="10"><rect x=".5" y=".5" width="11" height="8" fill="none" stroke="#808080"/></svg><svg class="a" style="left:34px;top:318px" width="12" height="10"><rect x=".5" y=".5" width="11" height="8" fill="none" stroke="#808080"/></svg>
<div class="a w " style="left:141px;top:317px;width:200px;text-align:center;color:#808080">done</div><div class="a w " style="left:464px;top:317px;color:#808080">?</div>
<div class="a" style="left:4px;top:337px;width:475px;height:7px;background:#d4d0c8;box-shadow:inset 1px 1px 0 #808080,inset -1px -1px 0 #fff"></div>
<div class="a" style="left:6px;top:339px;width:471px;height:3px;background:#0a246a"></div>
<div class="btn raised w" style="left:4px;top:346px;width:79px;height:28px;line-height:28px;font-size:11.2px;border:1px solid #000"><svg style="position:static;vertical-align:-2px;margin-right:4px" width="11" height="11"><circle cx="5.5" cy="5.5" r="4.5" fill="none" stroke="#000"/><path d="M5.5 1 V5.5 H10 M5.5 5.5 L2.5 8.5" stroke="#000" fill="none" stroke-width=".8"/></svg><u>P</u>lot...</div><div class="a" style="left:8px;top:350px;width:71px;height:20px;border:1px dotted #000"></div><div class="btn raised w" style="left:83px;top:346px;width:79px;height:28px;line-height:28px;font-size:11.2px"><svg style="position:static;vertical-align:-1px;margin-right:4px" width="11" height="9"><rect x=".5" y=".5" width="10" height="8" fill="none" stroke="#000"/><path d="M2.5 3.5 H7.5 M2.5 5.5 H5.5" stroke="#000"/></svg><u>V</u>iew...</div><div class="btn raised w" style="left:162px;top:346px;width:79px;height:28px;line-height:28px;font-size:11.2px"><u>K</u>ML/GPX...</div><div class="btn raised w" style="left:241px;top:346px;width:79px;height:28px;line-height:28px;font-size:11.2px"><svg style="position:static;vertical-align:-2px;margin-right:4px" width="12" height="12" viewBox="0 0 12 12"><circle cx="6" cy="6" r="3.1" fill="none" stroke="#000" stroke-width="2"/><path d="M6 0 V12 M0 6 H12 M1.8 1.8 L10.2 10.2 M10.2 1.8 L1.8 10.2" stroke="#000" stroke-width="1.6" stroke-dasharray="2 8"/></svg><u>O</u>ptions...</div><div class="btn raised w" style="left:320px;top:346px;width:79px;height:28px;line-height:28px;font-size:11.2px"><svg style="position:static;vertical-align:-1px;margin-right:5px" width="10" height="10"><path d="M0 0 L10 5 L0 10 Z" fill="#008000"/></svg>E<u>x</u>ecute</div><div class="btn raised w" style="left:399px;top:346px;width:79px;height:28px;line-height:28px;font-size:11.2px">E<u>x</u>it</div>
</div>
<div class="win" style="left:718px;top:654px;width:641px;height:500px;box-shadow:0 0 0 1px rgba(35,45,55,.85)">
<div class="a" style="left:0;top:0;width:641px;height:29px;background:#eff0f1"></div>
<svg class="a" style="left:7px;top:4px" width="21" height="21" viewBox="0 0 21 21">
<path d="M4 20 q-1-3 1.500-5 h10 q2.500 2 1.500 5 q-3 1-6-.5 h-1 q-3 1.500-6 .5z" fill="#1c1e1a"/><path d="M5.500 18.500 h3 M12.500 18.500 h3" stroke="#e6dc30" stroke-width="1.300"/><path d="M7 16 h7" stroke="#8a8a86" stroke-width="1.200"/>
<path d="M0 11.500 L3 9 L1.500 7.500 L6 7 L8 5.500 L10.500 9 L13 6 L15 8 L19 7.500 L17.500 10 L21 11.500 L17.500 13 L19 15.500 L14.500 14.500 L12.500 17 L10.500 13.500 L8 16.500 L6 14.500 L1.500 15.500 L3 13z" fill="#f01414"/>
<g transform="translate(2 .2)"><path d="M.5 1.5 h4.5 v1 h1 l1.5-1.5 h3 l1.5 1.5 h1 v-1.5 h4 v7.5 h-4 v-1.5 h-1.5 l-1 1.5 h-3.5 l-1-1.5 h-1.5 v2 h-4.5z" fill="#0b140c"/><rect x="1.5" y="2.3" width="2.8" height="5.6" rx="1" fill="url(#cy)"/><ellipse cx="9" cy="4.6" rx="2.7" ry="3" fill="url(#cy)"/><rect x="13.2" y="1" width="2.8" height="6.2" rx="1" fill="url(#cy)"/></g></svg>
<svg class="a" style="left:32px;top:5px" width="18" height="18" viewBox="-9 -9 18 18"><g transform="rotate(45)" fill="#c3c8cb"><rect x="-2.3" y="-6.2" width="4.6" height="7.4"/><rect x="-4.1" y=".9" width="8.2" height="1.2"/><rect x="-.55" y="2" width="1.1" height="5.6"/></g></svg>
<div class="kt" style="left:231px;top:6px">Z:\tmp\javad.pos &lt;@arcticus&gt;</div>
<svg class="a" style="left:569px;top:8px" width="12" height="12"><path d="M1 3.5 L6 8.5 L11 3.5" fill="none" stroke="#b8bec3" stroke-width="1.1"/></svg><svg class="a" style="left:593px;top:8px" width="12" height="12"><path d="M1 8.5 L6 3.5 L11 8.5" fill="none" stroke="#b8bec3" stroke-width="1.1"/></svg><svg class="a" style="left:614px;top:5px" width="18" height="18"><circle cx="9" cy="9" r="9" fill="#b9bfc3"/><path d="M5 5 L13 13 M13 5 L5 13" stroke="#fcfcfc" stroke-width="1.2" fill="none"/></svg>
<div class="a face" style="left:4px;top:29px;width:633px;height:44px"></div>
<div class="a w " style="left:8px;top:34px;"><u>F</u>ile</div><div class="a w " style="left:36px;top:34px;"><u>E</u>dit</div><div class="a w " style="left:66px;top:34px;"><u>V</u>iew</div><div class="a w " style="left:100px;top:34px;"><u>W</u>indows</div><div class="a w " style="left:155px;top:34px;"><u>H</u>elp</div>
<svg class="a" style="left:6.0px;top:53.0px" width="16" height="16" viewBox="0 0 16 16"><path d="M6 5 V11 M9 5 V11" stroke="#000" stroke-width="1.6"/><path d="M2 8 H4 M11 8 H14" stroke="#000" stroke-width="1" stroke-dasharray="1 1"/></svg>
<div class="a" style="left:26px;top:49px;width:23px;height:24px;background-image:conic-gradient(#fff 25%,#d4d0c8 0 50%,#fff 0 75%,#d4d0c8 0);background-size:2px 2px;box-shadow:inset 1px 1px 0 #808080,inset -1px -1px 0 #fff"></div>
<svg class="a" style="left:30.0px;top:53.0px" width="16" height="16" viewBox="0 0 16 16"><rect x="2.5" y="2.5" width="11" height="12" rx="1" fill="#e8e6e0" stroke="#909090"/><text x="8" y="12.5" font-size="10" text-anchor="middle" font-family="DejaVu Sans,sans-serif" fill="#000">1</text></svg>
<svg class="a" style="left:52.0px;top:53.0px" width="16" height="16" viewBox="0 0 16 16"><rect x="2.5" y="2.5" width="11" height="12" rx="1" fill="#dcd9d2" stroke="#a0a0a0"/><text x="8" y="12.5" font-size="10" text-anchor="middle" font-family="DejaVu Sans,sans-serif" fill="#000">2</text></svg>
<svg class="a" style="left:76.0px;top:53.0px" width="16" height="16" viewBox="0 0 16 16"><text x="8" y="12" font-size="9.5" text-anchor="middle" font-family="DejaVu Sans,sans-serif" fill="#808080" letter-spacing="-1">1·2</text></svg>
<div class="a sunken w" style="left:96px;top:50px;width:59px;height:20px;line-height:21px;padding-left:2px;letter-spacing:-.12px;color:#000;overflow:hidden">Gnd Trk</div><div class="a raised" style="left:137px;top:52px;width:16px;height:16px"></div><svg class="a" style="left:141px;top:58px" width="7" height="4"><path d="M0 0 H7 L3.5 4 Z" fill="#000"/></svg><div class="a sunken w" style="left:159px;top:50px;width:46px;height:20px;line-height:21px;padding-left:2px;letter-spacing:-.12px;color:#000;overflow:hidden">ALL</div><div class="a raised" style="left:187px;top:52px;width:16px;height:16px"></div><svg class="a" style="left:191px;top:58px" width="7" height="4"><path d="M0 0 H7 L3.5 4 Z" fill="#000"/></svg>
<svg class="a" style="left:212.0px;top:53.0px" width="16" height="16" viewBox="0 0 16 16"><rect x="2.5" y="2.5" width="11" height="11" fill="none" stroke="#b8b4ac"/><path d="M8 2 V14 M2 8 H14" stroke="#404040" stroke-width=".8"/><circle cx="8" cy="8" r="1.8"/></svg>
<svg class="a" style="left:237px;top:59px" width="7" height="4"><path d="M0 0 H7 L3.5 4 Z" fill="#000"/></svg>
<svg class="a" style="left:258.0px;top:53.0px" width="16" height="16" viewBox="0 0 16 16"><path d="M3.5 2.5 H12.5 M3.5 13.5 H12.5 M8 3 V13" stroke="#000" stroke-width="1.1"/><path d="M8 3 L5.6 6 H10.4 Z M8 13 L5.6 10 H10.4 Z" fill="#000"/></svg>
<svg class="a" style="left:280.0px;top:53.0px" width="16" height="16" viewBox="0 0 16 16"><circle cx="8" cy="8" r="4.2" fill="none" stroke="#000"/><circle cx="8" cy="8" r="1.7"/></svg>
<svg class="a" style="left:304.0px;top:53.0px" width="16" height="16" viewBox="0 0 16 16"><circle cx="8" cy="8" r="2.3" fill="#eee" stroke="#909090" stroke-width=".8"/></svg>
<div class="a" style="left:323px;top:49px;width:23px;height:24px;background-image:conic-gradient(#fff 25%,#d4d0c8 0 50%,#fff 0 75%,#d4d0c8 0);background-size:2px 2px;box-shadow:inset 1px 1px 0 #808080,inset -1px -1px 0 #fff"></div>
<svg class="a" style="left:327.0px;top:53.0px" width="16" height="16" viewBox="0 0 16 16"><path d="M5.5 3 V13 M8 3 V13 M10.5 3 V13 M3 5.5 H13 M3 8 H13 M3 10.5 H13" stroke="#202020" stroke-width=".9" stroke-dasharray="1.2 .8"/></svg>
<svg class="a" style="left:349.0px;top:53.0px" width="16" height="16" viewBox="0 0 16 16"><path d="M8 3 V13 M3 8 H13" stroke="#000" stroke-width=".8"/><circle cx="8" cy="8" r="2.6"/></svg>
<div class="a" style="left:369px;top:49px;width:23px;height:24px;box-shadow:inset 1px 1px 0 #fff,inset -1px -1px 0 #808080"></div>
<svg class="a" style="left:372.0px;top:53.0px" width="16" height="16" viewBox="0 0 16 16"><rect x="2" y="2.5" width="12" height="11" fill="#142820"/><path d="M7 5 L11 4 L12 9 L9 12 L6 10 Z" fill="#cfe0ee"/><circle cx="6" cy="7" r="1.6" fill="#7f9fb6"/></svg>
<svg class="a" style="left:395.0px;top:53.0px" width="16" height="16" viewBox="0 0 16 16"><circle cx="8" cy="8" r="5.6" fill="#2a3fd0"/><path d="M3.5 6 Q8 3 12.5 7 M3 9.5 Q8 6.5 13 10.5 M5 12.5 Q8 10.5 11 13" stroke="#e8ecff" stroke-width="1.4" fill="none"/></svg>
<svg class="a" style="left:418.0px;top:53.0px" width="16" height="16" viewBox="0 0 16 16"><rect x="2" y="2.5" width="12" height="11" fill="#8fd43a" stroke="#5a6e8c"/><path d="M4 6 H12 M5 9.5 H7 M9 9.5 H11" stroke="#f4e84a" stroke-width="1.6"/><path d="M4 11.5 H12" stroke="#3a8c4a" stroke-width="1"/></svg>
<svg class="a" style="left:577.0px;top:53.0px" width="16" height="16" viewBox="0 0 16 16"><path d="M3.8 3.8 L12.2 12.2 M12.2 3.8 L3.8 12.2" stroke="#000" stroke-width="1.05"/></svg>
<svg class="a" style="left:598.0px;top:53.0px" width="16" height="16" viewBox="0 0 16 16"><path d="M12 7 A4.2 4.2 0 0 0 4.6 5.6 M4 9 A4.2 4.2 0 0 0 11.4 10.4" stroke="#000" stroke-width="1.3" fill="none"/><path d="M3 3.2 V7.2 H7 Z M13 12.8 V8.8 H9 Z" fill="#000"/></svg>
<svg class="a" style="left:619.0px;top:53.0px" width="16" height="16" viewBox="0 0 16 16"><circle cx="8" cy="8" r="3" fill="none" stroke="#000" stroke-width="1.9"/><path d="M8 2.5 V13.5 M2.5 8 H13.5 M4.1 4.1 L11.9 11.9 M11.9 4.1 L4.1 11.9" stroke="#000" stroke-width="1.8" stroke-dasharray="1.8 7.4"/></svg>
<svg class="a" style="left:4px;top:73px;background:#fff;overflow:hidden" width="632" height="425" viewBox="722 727 632 425"><g shape-rendering="crispEdges"><path d="M752.5 727 V1152" stroke="#c0c0c0" stroke-width="1" stroke-dasharray="4 3"/><path d="M798.5 727 V1152" stroke="#c0c0c0" stroke-width="1" stroke-dasharray="4 3"/><path d="M844.5 727 V1152" stroke="#c0c0c0" stroke-width="1" stroke-dasharray="4 3"/><path d="M890.5 727 V1152" stroke="#c0c0c0" stroke-width="1" stroke-dasharray="4 3"/><path d="M937.5 727 V1152" stroke="#c0c0c0" stroke-width="1" stroke-dasharray="4 3"/><path d="M983.5 727 V1152" stroke="#c0c0c0" stroke-width="1" stroke-dasharray="4 3"/><path d="M1029.5 727 V1152" stroke="#c0c0c0" stroke-width="1"/><path d="M1075.5 727 V1152" stroke="#c0c0c0" stroke-width="1" stroke-dasharray="4 3"/><path d="M1121.5 727 V1152" stroke="#c0c0c0" stroke-width="1" stroke-dasharray="4 3"/><path d="M1167.5 727 V1152" stroke="#c0c0c0" stroke-width="1" stroke-dasharray="4 3"/><path d="M1214.5 727 V1152" stroke="#c0c0c0" stroke-width="1" stroke-dasharray="4 3"/><path d="M1260.5 727 V1152" stroke="#c0c0c0" stroke-width="1" stroke-dasharray="4 3"/><path d="M1306.5 727 V1152" stroke="#c0c0c0" stroke-width="1" stroke-dasharray="4 3"/><path d="M1352.5 727 V1152" stroke="#c0c0c0" stroke-width="1" stroke-dasharray="4 3"/><path d="M722 730.5 H1354" stroke="#c0c0c0" stroke-width="1" stroke-dasharray="4 3"/><path d="M722 776.5 H1354" stroke="#c0c0c0" stroke-width="1" stroke-dasharray="4 3"/><path d="M722 822.5 H1354" stroke="#c0c0c0" stroke-width="1" stroke-dasharray="4 3"/><path d="M722 868.5 H1354" stroke="#c0c0c0" stroke-width="1" stroke-dasharray="4 3"/><path d="M722 914.5 H1354" stroke="#c0c0c0" stroke-width="1" stroke-dasharray="4 3"/><path d="M722 960.5 H1354" stroke="#c0c0c0" stroke-width="1"/><path d="M722 1006.5 H1354" stroke="#c0c0c0" stroke-width="1" stroke-dasharray="4 3"/><path d="M722 1052.5 H1354" stroke="#c0c0c0" stroke-width="1" stroke-dasharray="4 3"/><path d="M722 1098.5 H1354" stroke="#c0c0c0" stroke-width="1" stroke-dasharray="4 3"/><path d="M722 1144.5 H1354" stroke="#c0c0c0" stroke-width="1" stroke-dasharray="4 3"/><path d="M722.5 727 V1152" stroke="#c0c0c0" stroke-dasharray="4 3"/></g><path d="M1105 729 L1101 731 L1095 737 L1095 737 L1082 757 L1076 776 L1075 783 L1083 763 L1082 776 L1079 759 L1079 757 L1073 771 L1065 784 L1065 792 L1077 787 L1081 799 L1075 794 L1074 795 L1072 807 L1064 805 L1074 802 L1075 797 L1060 809 L1070 814 L1072 793 L1064 801 L1059 815 L1069 802 L1072 820 L1070 843 L1056 846 L1048 856 L1039 850 L1039 840 L1016 860 L1029 843 L1032 866 L1018 843 L1013 853 L1031 844 L1030 864 L1035 871 L1037 892 L1042 895 L1062 872 L1061 885 L1060 860 L1037 875 L1049 874 L1068 859 L1062 871 L1064 878 L1072 881 L1067 875 L1059 890 L1070 879 L1056 900 L1058 881 L1053 882 L1036 902 L1020 917 L1032 903 L1037 916 L1038 917 L1044 916 L1047 911 L1044 916 L1047 923 L1046 945 L1041 932 L1050 927 L1052 919 L1022 940 L1028 920 L1031 923 L1039 916 L1033 919 L1033 948 L1033 935 L1033 929 L1038 893 L1022 911 L1034 909 L1045 919 L1048 894 L1054 892 L1022 907 L1006 919 L995 923 L1012 920 L1020 912 L1022 918 L1040 911 L1034 920 L1020 948 L1019 947 L1029 936 L1036 928 L1029 899 L1020 903 L1014 885 L1021 898 L1011 912 L1006 904 L1025 907 L1048 888 L1043 896 L1067 865 L1059 864 L1061 868 L1044 885 L1056 894 L1049 902 L1065 881 L1066 874 L1058 883 L1062 844 L1073 817 L1066 822 L1072 821 L1081 820 L1087 817 L1096 833 L1098 818 L1086 791 L1090 767 L1089 756 L1087 761 L1087 759 L1083 787 L1086 793 L1077 789 L1083 780 L1084 759 L1083 774 L1085 774 L1078 775 L1083 754 L1075 768 L1079 755 L1088 742 L1094 737 L1105 719 L1104 726 L1081 749 L1099 732 L1079 750 L1070 771 L1065 787 L1062 809 L1044 816 L1054 828 L1052 823 L1031 847 L1056 849 L1065 834 L1059 857 L1066 860 L1066 844 L1072 847 L1068 846 L1065 833 L1063 847 L1056 837 L1058 874 L1031 878 L1036 882 L1036 899 L1045 891 L1064 862 L1054 867 L1065 885 L1062 865 L1061 871 L1051 868 L1051 897 L1043 880 L1046 902 L1047 923 L1052 906 L1052 876 L1056 880 L1055 875 L1054 886 L1051 898 L1058 896 L1047 899 L1048 892 L1048 894 L1048 896 L1035 896 L1044 904 L1039 910 L1028 916 L1038 891 L1048 883 L1025 875 L1045 870 L1031 874 L1039 872 L1038 887 L1038 911 L1043 912 L1048 934 L1034 943 L1042 937 L1051 929 L1057 935 L1079 930 L1070 944 L1090 941 L1091 933 L1082 944 L1078 925 L1083 930 L1075 939 L1074 948 L1069 946 L1071 940 L1060 925 L1042 926 L1022 922 L1031 915 L1029 926 L1016 925 L1020 950 L1012 961 L997 954 L1010 960 L1016 932 L999 941 L997 918 L990 915 L997 921 L1007 933 L1020 954 L1018 936 L1011 924 L1014 927 L1000 937 L1006 924 L1006 926 L1002 930 L1008 942 L1005 942 L982 941 L991 930 L1002 915 L991 923 L994 925 L1004 936 L999 938 L1003 938 L1008 950 L999 941 L997 938 L1002 927 L1008 925 L1006 937 L1002 969 L1006 979 L984 988 L994 971 L1022 975 L1036 975 L1044 980 L1040 981 L1027 982 L1016 991 L1039 987 L1039 978 L1037 988 L1040 971 L1045 975 L1062 962 L1055 982 L1047 980 L1036 993 L1029 994 L1038 978 L1035 991 L1044 976 L1045 972 L1053 988 L1074 976 L1076 973 L1069 962 L1083 940 L1062 961 L1043 942 L1035 960 L1031 960 L1020 956 L1007 955 L1014 952 L1014 956 L1019 942 L1037 936 L1034 946 L1028 938 L1026 925 L1032 930 L1052 937 L1050 927 L1026 962 L1030 948 L1034 944 L1038 936 L1045 933 L1041 906 L1030 908 L1041 896 L1049 890 L1047 903 L1043 910 L1048 891 L1039 899 L1047 898 L1056 887 L1041 912 L1040 910 L1039 926 L1031 929 L1032 919 L1056 888 L1035 897 L1033 901 L1038 900 L1045 874 L1035 890 L1029 871 L1040 852 L1040 873 L1064 871 L1059 859 L1063 862 L1054 845 L1056 847 L1058 827 L1064 821 L1063 820 L1072 816 L1064 833 L1056 840 L1063 834 L1057 847 L1061 837 L1066 810 L1071 798 L1065 782 L1067 783 L1075 775 L1073 772 L1064 778 L1067 775 L1059 792 L1053 799 L1064 806 L1082 799 L1080 795 L1085 803 L1071 792 L1072 807 L1089 819 L1087 825 L1085 839 L1067 860 L1034 852 L1031 861 L1052 871 L1050 867 L1045 859 L1054 851 L1054 854 L1062 854 L1058 862 L1053 872 L1070 858 L1056 867 L1054 883 L1075 863 L1078 872 L1071 877 L1081 860 L1073 867 L1068 877 L1057 890 L1034 892 L1043 889 L1033 909 L1049 908 L1056 905 L1048 928 L1038 941 L1036 940 L1047 938 L1036 966 L1041 952 L1046 935 L1041 942 L1023 948 L1008 956 L1007 943 L1020 936 L1018 936 L1035 943 L1038 941 L1038 955 L1064 935 L1037 963 L1041 957 L1045 965 L1033 956 L1043 954 L1033 937 L1014 937 L1012 934 L1007 941 L1008 930 L1005 932 L1016 934 L1033 950 L1030 939 L1055 909 L1053 907 L1033 921 L1032 931 L1039 911 L1016 933 L1019 946 L1024 952 L1021 967 L1017 974 L1010 978 L1031 971 L1029 972 L1023 953 L1033 955 L1038 959 L1050 957 L1043 951 L1040 962 L1034 957 L1040 953 L1026 957 L1028 962 L1037 948 L1033 946 L1045 958 L1048 949 L1070 939 L1076 937 L1078 933 L1044 966 L1048 959 L1038 958 L1035 985 L1045 959 L1057 938 L1055 935 L1051 956 L1033 940 L1038 959 L1046 950 L1050 959 L1047 932 L1050 949 L1021 964 L1027 966 L1015 998 L1017 988 L1014 995 L1007 1004 L1004 1002 L1000 998 L1017 974 L1013 979 L1025 982 L1025 969 L1030 979 L1008 976 L1013 993 L1012 992 L1009 995 L1005 981 L1003 976 L1014 965 L1024 955 L1029 950 L1028 977 L1029 972 L1011 980 L1015 977 L1018 976 L1025 991 L1030 1006 L1029 1003 L1026 1001 L1008 1001 L1011 999 L1013 990 L1013 1002 L986 1031 L974 1026 L1006 1037 L1012 1003 L1010 1013 L989 1023 L997 1034 L995 1033 L994 1040 L993 1041 L998 1011 L1009 1018 L1011 1011 L1013 1024 L1034 1042 L1013 1030 L1030 1043 L1038 1055 L1028 1045 L1019 1056 L1008 1032 L1032 1066 L1022 1055 L1015 1057 L1017 1073 L1030 1056 L1031 1048 L1027 1050 L1020 1056 L997 1034 L994 1024 L998 1032 L1003 1045 L999 1040 L1001 1019 L1008 1035 L1009 1041 L1012 1059 L1020 1071 L1034 1075 L1029 1068 L1020 1060 L1040 1084 L1044 1084 L1049 1098 L1033 1111 L1037 1098 L1035 1114 L1031 1098 L1022 1089 L1016 1108 L1039 1106 L1039 1118 L1042 1106 L1045 1125 L1042 1136 L1038 1135 L1048 1134 L1046 1110 L1037 1113 L1044 1107 L1045 1132 L1028 1132 L1027 1152 L1017 1143 L1008 1136 L1014 1133 L1019 1129 L1034 1116 L1015 1108 L1009 1108 L1008 1098 L998 1106 L1016 1108 L1016 1119 L1016 1122 L1024 1122 L1001 1122 L996 1123 L994 1133 L1019 1134 L1009 1121 L988 1106 L996 1088 L981 1090 L994 1081 L994 1083 L1013 1098 L1024 1131 L1026 1135 L1037 1159 L1040 1153 L1038 1155 L1024 1147 L1010 1141 L1016 1158 L1031 1142 L1012 1155 L1019 1178 L1008 1199 L1013 1194 L1016 1186 L1004 1190 L995 1164 L994 1151 L1001 1152 L998 1149 L1010 1140 L1013 1147 L1029 1139 L1035 1129 L1030 1143 L1019 1149 L1021 1156 L1029 1129 L1041 1116 L1038 1107 L1033 1112 L1026 1116 L1026 1123 L999 1123 L1003 1135 L1007 1107 L1020 1112 L1037 1097 L1060 1096 L1062 1095 L1046 1092 L1051 1107 L1054 1124 L1035 1111 L1027 1099 L1033 1088 L1029 1092 L1027 1094 L1035 1095 L1026 1105 L1041 1082 L1050 1084 L1041 1063 L1025 1067 L1032 1063 L1048 1079 L1030 1067 L1039 1075 L1024 1077 L1033 1086 L1027 1089 L1035 1089 L1014 1077 L1021 1079 L1030 1076 L1028 1066 L1033 1061 L1031 1081 L1045 1102 L1048 1102 L1042 1115 L1030 1101 L1043 1097 L1045 1094 L1044 1083 L1050 1058 L1035 1050 L1024 1040 L1035 1051 L1041 1031 L1034 1044 L1025 1024 L1029 1018 L1008 1017 L995 1022 L986 1035 L983 1025 L1002 1018 L1010 1030 L996 1033 L995 1024 L1005 1011 L1002 1003 L985 992 L1003 1004 L996 1008 L1005 975 L1009 997 L1025 1010 L1019 1023 L1026 1033 L1024 1007 L1025 988 L1014 997 L1031 972 L1045 981 L1055 967 L1068 998 L1065 994 L1070 991 L1063 1003 L1068 982 L1070 977 L1080 982 L1066 996 L1078 998 L1076 988 L1080 1002 L1059 1004 L1059 983 L1080 987 L1086 974 L1060 984 L1058 972 L1053 966 L1041 974 L1032 979 L1038 971 L1040 963 L1037 984 L1043 979 L1053 972 L1057 955 L1046 951 L1033 975 L1037 995 L1024 1006 L1038 1012 L1036 1000 L1034 1023 L1028 1005 L1031 1001 L1049 994 L1052 982 L1037 995 L1053 999 L1041 973 L1023 956 L1004 960 L1022 964 L1023 941 L1034 918 L1033 914 L1037 923 L1036 925 L1037 925 L1039 917 L1038 901 L1031 937 L1035 926 L1019 921 L1029 920 L1027 934 L1018 928 L1019 953 L1001 944 L1031 931 L1031 925 L1029 936 L1015 940 L1035 933 L1043 932 L1041 919 L1048 933 L1052 928 L1041 943 L1029 956 L1030 950 L1032 922 L1018 922 L1027 928 L1040 934 L1026 930 L1028 960 L1018 977 L1021 989 L1021 997 L1014 1011 L1002 995 L997 1010 L992 995 L984 991 L984 990 L980 987 L982 991 L990 997 L973 1004 L972 1000 L963 1013 L969 1005 L987 1004 L1002 1003 L988 989 L996 1012 L1001 1022 L991 1030 L990 1043 L996 1054 L987 1026 L991 1043 L997 1038 L995 1034 L1001 1038 L1005 1059 L1027 1081 L1038 1097 L1038 1090 L1029 1082 L1021 1077 L1028 1094 L1008 1083 L1006 1079 L996 1063 L1004 1036 L1033 1042 L1030 1047 L1032 1070 L1028 1073 L1042 1066 L1058 1080 L1053 1076 L1058 1065 L1058 1051 L1069 1071 L1073 1062 L1058 1058 L1063 1047 L1055 1076 L1047 1069 L1054 1105 L1033 1096 L1044 1087 L1038 1112 L1031 1101 L1039 1077 L1047 1068 L1030 1053 L1023 1067 L1024 1084 L1030 1074 L1011 1091 L1017 1118 L1001 1126 L1000 1114 L990 1128 L975 1114 L985 1112 L984 1092 L1006 1104 L1006 1116 L999 1103 L1004 1099 L1024 1103 L1013 1109 L1024 1129 L1017 1126 L1008 1099 L1003 1112 L1008 1094 L1017 1099 L1032 1108 L1041 1096 L1046 1084 L1046 1089 L1042 1103 L1048 1115 L1039 1112 L1033 1099 L1032 1094 L1035 1130 L1026 1131 L1023 1113 L1013 1110 L1009 1125 L989 1129 L997 1119 L1006 1113 L1011 1110 L1005 1079 L1012 1049 L1013 1057 L1008 1050 L1029 1076 L1041 1074 L1018 1052 L1010 1048 L1013 1044 L1010 1084 L1015 1080 L1026 1074 L1014 1092 L1013 1086 L999 1083 L978 1054 L986 1059 L968 1057 L968 1050 L967 1030 L980 1041 L991 1040 L996 1031 L1005 1032 L1006 1031 L1002 1029 L1011 1057 L1036 1056 L1019 1067" fill="none" stroke="#b4b4b4" stroke-width="1"/><path d="M1104 729.5h3M1105.5 728v3M1100 731.5h3M1101.5 730v3M1094 737.5h3M1095.5 736v3M1094 737.5h3M1095.5 736v3M1081 757.5h3M1082.5 756v3M1075 776.5h3M1076.5 775v3M1074 783.5h3M1075.5 782v3M1082 763.5h3M1083.5 762v3M1081 776.5h3M1082.5 775v3M1078 759.5h3M1079.5 758v3M1078 757.5h3M1079.5 756v3M1072 771.5h3M1073.5 770v3M1064 784.5h3M1065.5 783v3M1064 792.5h3M1065.5 791v3M1076 787.5h3M1077.5 786v3M1080 799.5h3M1081.5 798v3M1074 794.5h3M1075.5 793v3M1073 795.5h3M1074.5 794v3M1071 807.5h3M1072.5 806v3M1063 805.5h3M1064.5 804v3M1073 802.5h3M1074.5 801v3M1074 797.5h3M1075.5 796v3M1059 809.5h3M1060.5 808v3M1069 814.5h3M1070.5 813v3M1071 793.5h3M1072.5 792v3M1063 801.5h3M1064.5 800v3M1058 815.5h3M1059.5 814v3M1068 802.5h3M1069.5 801v3M1071 820.5h3M1072.5 819v3M1069 843.5h3M1070.5 842v3M1055 846.5h3M1056.5 845v3M1047 856.5h3M1048.5 855v3M1038 850.5h3M1039.5 849v3M1038 840.5h3M1039.5 839v3M1015 860.5h3M1016.5 859v3M1028 843.5h3M1029.5 842v3M1031 866.5h3M1032.5 865v3M1017 843.5h3M1018.5 842v3M1012 853.5h3M1013.5 852v3M1030 844.5h3M1031.5 843v3M1029 864.5h3M1030.5 863v3M1034 871.5h3M1035.5 870v3M1036 892.5h3M1037.5 891v3M1041 895.5h3M1042.5 894v3M1061 872.5h3M1062.5 871v3M1060 885.5h3M1061.5 884v3M1059 860.5h3M1060.5 859v3M1036 875.5h3M1037.5 874v3M1048 874.5h3M1049.5 873v3M1067 859.5h3M1068.5 858v3M1061 871.5h3M1062.5 870v3M1063 878.5h3M1064.5 877v3M1071 881.5h3M1072.5 880v3M1066 875.5h3M1067.5 874v3M1058 890.5h3M1059.5 889v3M1069 879.5h3M1070.5 878v3M1055 900.5h3M1056.5 899v3M1057 881.5h3M1058.5 880v3M1052 882.5h3M1053.5 881v3M1035 902.5h3M1036.5 901v3M1019 917.5h3M1020.5 916v3M1031 903.5h3M1032.5 902v3M1036 916.5h3M1037.5 915v3M1037 917.5h3M1038.5 916v3M1043 916.5h3M1044.5 915v3M1046 911.5h3M1047.5 910v3M1043 916.5h3M1044.5 915v3M1046 923.5h3M1047.5 922v3M1045 945.5h3M1046.5 944v3M1040 932.5h3M1041.5 931v3M1049 927.5h3M1050.5 926v3M1051 919.5h3M1052.5 918v3M1021 940.5h3M1022.5 939v3M1027 920.5h3M1028.5 919v3M1030 923.5h3M1031.5 922v3M1038 916.5h3M1039.5 915v3M1032 919.5h3M1033.5 918v3M1032 948.5h3M1033.5 947v3M1032 935.5h3M1033.5 934v3M1032 929.5h3M1033.5 928v3M1037 893.5h3M1038.5 892v3M1021 911.5h3M1022.5 910v3M1033 909.5h3M1034.5 908v3M1044 919.5h3M1045.5 918v3M1047 894.5h3M1048.5 893v3M1053 892.5h3M1054.5 891v3M1021 907.5h3M1022.5 906v3M1005 919.5h3M1006.5 918v3M994 923.5h3M995.5 922v3M1011 920.5h3M1012.5 919v3M1019 912.5h3M1020.5 911v3M1021 918.5h3M1022.5 917v3M1039 911.5h3M1040.5 910v3M1033 920.5h3M1034.5 919v3M1019 948.5h3M1020.5 947v3M1018 947.5h3M1019.5 946v3M1028 936.5h3M1029.5 935v3M1035 928.5h3M1036.5 927v3M1028 899.5h3M1029.5 898v3M1019 903.5h3M1020.5 902v3M1013 885.5h3M1014.5 884v3M1020 898.5h3M1021.5 897v3M1010 912.5h3M1011.5 911v3M1005 904.5h3M1006.5 903v3M1024 907.5h3M1025.5 906v3M1047 888.5h3M1048.5 887v3M1042 896.5h3M1043.5 895v3M1066 865.5h3M1067.5 864v3M1058 864.5h3M1059.5 863v3M1060 868.5h3M1061.5 867v3M1043 885.5h3M1044.5 884v3M1055 894.5h3M1056.5 893v3M1048 902.5h3M1049.5 901v3M1064 881.5h3M1065.5 880v3M1065 874.5h3M1066.5 873v3M1057 883.5h3M1058.5 882v3M1061 844.5h3M1062.5 843v3M1072 817.5h3M1073.5 816v3M1065 822.5h3M1066.5 821v3M1071 821.5h3M1072.5 820v3M1080 820.5h3M1081.5 819v3M1086 817.5h3M1087.5 816v3M1095 833.5h3M1096.5 832v3M1097 818.5h3M1098.5 817v3M1085 791.5h3M1086.5 790v3M1089 767.5h3M1090.5 766v3M1088 756.5h3M1089.5 755v3M1086 761.5h3M1087.5 760v3M1086 759.5h3M1087.5 758v3M1082 787.5h3M1083.5 786v3M1085 793.5h3M1086.5 792v3M1076 789.5h3M1077.5 788v3M1082 780.5h3M1083.5 779v3M1083 759.5h3M1084.5 758v3M1082 774.5h3M1083.5 773v3M1084 774.5h3M1085.5 773v3M1077 775.5h3M1078.5 774v3M1082 754.5h3M1083.5 753v3M1074 768.5h3M1075.5 767v3M1078 755.5h3M1079.5 754v3M1087 742.5h3M1088.5 741v3M1093 737.5h3M1094.5 736v3M1104 719.5h3M1105.5 718v3M1103 726.5h3M1104.5 725v3M1080 749.5h3M1081.5 748v3M1098 732.5h3M1099.5 731v3M1078 750.5h3M1079.5 749v3M1069 771.5h3M1070.5 770v3M1064 787.5h3M1065.5 786v3M1061 809.5h3M1062.5 808v3M1043 816.5h3M1044.5 815v3M1053 828.5h3M1054.5 827v3M1051 823.5h3M1052.5 822v3M1030 847.5h3M1031.5 846v3M1055 849.5h3M1056.5 848v3M1064 834.5h3M1065.5 833v3M1058 857.5h3M1059.5 856v3M1065 860.5h3M1066.5 859v3M1065 844.5h3M1066.5 843v3M1071 847.5h3M1072.5 846v3M1067 846.5h3M1068.5 845v3M1064 833.5h3M1065.5 832v3M1062 847.5h3M1063.5 846v3M1055 837.5h3M1056.5 836v3M1057 874.5h3M1058.5 873v3M1030 878.5h3M1031.5 877v3M1035 882.5h3M1036.5 881v3M1035 899.5h3M1036.5 898v3M1044 891.5h3M1045.5 890v3M1063 862.5h3M1064.5 861v3M1053 867.5h3M1054.5 866v3M1064 885.5h3M1065.5 884v3M1061 865.5h3M1062.5 864v3M1060 871.5h3M1061.5 870v3M1050 868.5h3M1051.5 867v3M1050 897.5h3M1051.5 896v3M1042 880.5h3M1043.5 879v3M1045 902.5h3M1046.5 901v3M1046 923.5h3M1047.5 922v3M1051 906.5h3M1052.5 905v3M1051 876.5h3M1052.5 875v3M1055 880.5h3M1056.5 879v3M1054 875.5h3M1055.5 874v3M1053 886.5h3M1054.5 885v3M1050 898.5h3M1051.5 897v3M1057 896.5h3M1058.5 895v3M1046 899.5h3M1047.5 898v3M1047 892.5h3M1048.5 891v3M1047 894.5h3M1048.5 893v3M1047 896.5h3M1048.5 895v3M1034 896.5h3M1035.5 895v3M1043 904.5h3M1044.5 903v3M1038 910.5h3M1039.5 909v3M1027 916.5h3M1028.5 915v3M1037 891.5h3M1038.5 890v3M1047 883.5h3M1048.5 882v3M1024 875.5h3M1025.5 874v3M1044 870.5h3M1045.5 869v3M1030 874.5h3M1031.5 873v3M1038 872.5h3M1039.5 871v3M1037 887.5h3M1038.5 886v3M1037 911.5h3M1038.5 910v3M1042 912.5h3M1043.5 911v3M1047 934.5h3M1048.5 933v3M1033 943.5h3M1034.5 942v3M1041 937.5h3M1042.5 936v3M1050 929.5h3M1051.5 928v3M1056 935.5h3M1057.5 934v3M1078 930.5h3M1079.5 929v3M1069 944.5h3M1070.5 943v3M1089 941.5h3M1090.5 940v3M1090 933.5h3M1091.5 932v3M1081 944.5h3M1082.5 943v3M1077 925.5h3M1078.5 924v3M1082 930.5h3M1083.5 929v3M1074 939.5h3M1075.5 938v3M1073 948.5h3M1074.5 947v3M1068 946.5h3M1069.5 945v3M1070 940.5h3M1071.5 939v3M1059 925.5h3M1060.5 924v3M1041 926.5h3M1042.5 925v3M1021 922.5h3M1022.5 921v3M1030 915.5h3M1031.5 914v3M1028 926.5h3M1029.5 925v3M1015 925.5h3M1016.5 924v3M1019 950.5h3M1020.5 949v3M1011 961.5h3M1012.5 960v3M996 954.5h3M997.5 953v3M1009 960.5h3M1010.5 959v3M1015 932.5h3M1016.5 931v3M998 941.5h3M999.5 940v3M996 918.5h3M997.5 917v3M989 915.5h3M990.5 914v3M996 921.5h3M997.5 920v3M1006 933.5h3M1007.5 932v3M1019 954.5h3M1020.5 953v3M1017 936.5h3M1018.5 935v3M1010 924.5h3M1011.5 923v3M1013 927.5h3M1014.5 926v3M999 937.5h3M1000.5 936v3M1005 924.5h3M1006.5 923v3M1005 926.5h3M1006.5 925v3M1001 930.5h3M1002.5 929v3M1007 942.5h3M1008.5 941v3M1004 942.5h3M1005.5 941v3M981 941.5h3M982.5 940v3M990 930.5h3M991.5 929v3M1001 915.5h3M1002.5 914v3M990 923.5h3M991.5 922v3M993 925.5h3M994.5 924v3M1003 936.5h3M1004.5 935v3M998 938.5h3M999.5 937v3M1002 938.5h3M1003.5 937v3M1007 950.5h3M1008.5 949v3M998 941.5h3M999.5 940v3M996 938.5h3M997.5 937v3M1001 927.5h3M1002.5 926v3M1007 925.5h3M1008.5 924v3M1005 937.5h3M1006.5 936v3M1001 969.5h3M1002.5 968v3M1005 979.5h3M1006.5 978v3M983 988.5h3M984.5 987v3M993 971.5h3M994.5 970v3M1021 975.5h3M1022.5 974v3M1035 975.5h3M1036.5 974v3M1043 980.5h3M1044.5 979v3M1039 981.5h3M1040.5 980v3M1026 982.5h3M1027.5 981v3M1015 991.5h3M1016.5 990v3M1038 987.5h3M1039.5 986v3M1038 978.5h3M1039.5 977v3M1036 988.5h3M1037.5 987v3M1039 971.5h3M1040.5 970v3M1044 975.5h3M1045.5 974v3M1061 962.5h3M1062.5 961v3M1054 982.5h3M1055.5 981v3M1046 980.5h3M1047.5 979v3M1035 993.5h3M1036.5 992v3M1028 994.5h3M1029.5 993v3M1037 978.5h3M1038.5 977v3M1034 991.5h3M1035.5 990v3M1043 976.5h3M1044.5 975v3M1044 972.5h3M1045.5 971v3M1052 988.5h3M1053.5 987v3M1073 976.5h3M1074.5 975v3M1075 973.5h3M1076.5 972v3M1068 962.5h3M1069.5 961v3M1082 940.5h3M1083.5 939v3M1061 961.5h3M1062.5 960v3M1042 942.5h3M1043.5 941v3M1034 960.5h3M1035.5 959v3M1030 960.5h3M1031.5 959v3M1019 956.5h3M1020.5 955v3M1006 955.5h3M1007.5 954v3M1013 952.5h3M1014.5 951v3M1013 956.5h3M1014.5 955v3M1018 942.5h3M1019.5 941v3M1036 936.5h3M1037.5 935v3M1033 946.5h3M1034.5 945v3M1027 938.5h3M1028.5 937v3M1025 925.5h3M1026.5 924v3M1031 930.5h3M1032.5 929v3M1051 937.5h3M1052.5 936v3M1049 927.5h3M1050.5 926v3M1025 962.5h3M1026.5 961v3M1029 948.5h3M1030.5 947v3M1033 944.5h3M1034.5 943v3M1037 936.5h3M1038.5 935v3M1044 933.5h3M1045.5 932v3M1040 906.5h3M1041.5 905v3M1029 908.5h3M1030.5 907v3M1040 896.5h3M1041.5 895v3M1048 890.5h3M1049.5 889v3M1046 903.5h3M1047.5 902v3M1042 910.5h3M1043.5 909v3M1047 891.5h3M1048.5 890v3M1038 899.5h3M1039.5 898v3M1046 898.5h3M1047.5 897v3M1055 887.5h3M1056.5 886v3M1040 912.5h3M1041.5 911v3M1039 910.5h3M1040.5 909v3M1038 926.5h3M1039.5 925v3M1030 929.5h3M1031.5 928v3M1031 919.5h3M1032.5 918v3M1055 888.5h3M1056.5 887v3M1034 897.5h3M1035.5 896v3M1032 901.5h3M1033.5 900v3M1037 900.5h3M1038.5 899v3M1044 874.5h3M1045.5 873v3M1034 890.5h3M1035.5 889v3M1028 871.5h3M1029.5 870v3M1039 852.5h3M1040.5 851v3M1039 873.5h3M1040.5 872v3M1063 871.5h3M1064.5 870v3M1058 859.5h3M1059.5 858v3M1062 862.5h3M1063.5 861v3M1053 845.5h3M1054.5 844v3M1055 847.5h3M1056.5 846v3M1057 827.5h3M1058.5 826v3M1063 821.5h3M1064.5 820v3M1062 820.5h3M1063.5 819v3M1071 816.5h3M1072.5 815v3M1063 833.5h3M1064.5 832v3M1055 840.5h3M1056.5 839v3M1062 834.5h3M1063.5 833v3M1056 847.5h3M1057.5 846v3M1060 837.5h3M1061.5 836v3M1065 810.5h3M1066.5 809v3M1070 798.5h3M1071.5 797v3M1064 782.5h3M1065.5 781v3M1066 783.5h3M1067.5 782v3M1074 775.5h3M1075.5 774v3M1072 772.5h3M1073.5 771v3M1063 778.5h3M1064.5 777v3M1066 775.5h3M1067.5 774v3M1058 792.5h3M1059.5 791v3M1052 799.5h3M1053.5 798v3M1063 806.5h3M1064.5 805v3M1081 799.5h3M1082.5 798v3M1079 795.5h3M1080.5 794v3M1084 803.5h3M1085.5 802v3M1070 792.5h3M1071.5 791v3M1071 807.5h3M1072.5 806v3M1088 819.5h3M1089.5 818v3M1086 825.5h3M1087.5 824v3M1084 839.5h3M1085.5 838v3M1066 860.5h3M1067.5 859v3M1033 852.5h3M1034.5 851v3M1030 861.5h3M1031.5 860v3M1051 871.5h3M1052.5 870v3M1049 867.5h3M1050.5 866v3M1044 859.5h3M1045.5 858v3M1053 851.5h3M1054.5 850v3M1053 854.5h3M1054.5 853v3M1061 854.5h3M1062.5 853v3M1057 862.5h3M1058.5 861v3M1052 872.5h3M1053.5 871v3M1069 858.5h3M1070.5 857v3M1055 867.5h3M1056.5 866v3M1053 883.5h3M1054.5 882v3M1074 863.5h3M1075.5 862v3M1077 872.5h3M1078.5 871v3M1070 877.5h3M1071.5 876v3M1080 860.5h3M1081.5 859v3M1072 867.5h3M1073.5 866v3M1067 877.5h3M1068.5 876v3M1056 890.5h3M1057.5 889v3M1033 892.5h3M1034.5 891v3M1042 889.5h3M1043.5 888v3M1032 909.5h3M1033.5 908v3M1048 908.5h3M1049.5 907v3M1055 905.5h3M1056.5 904v3M1047 928.5h3M1048.5 927v3M1037 941.5h3M1038.5 940v3M1035 940.5h3M1036.5 939v3M1046 938.5h3M1047.5 937v3M1035 966.5h3M1036.5 965v3M1040 952.5h3M1041.5 951v3M1045 935.5h3M1046.5 934v3M1040 942.5h3M1041.5 941v3M1022 948.5h3M1023.5 947v3M1007 956.5h3M1008.5 955v3M1006 943.5h3M1007.5 942v3M1019 936.5h3M1020.5 935v3M1017 936.5h3M1018.5 935v3M1034 943.5h3M1035.5 942v3M1037 941.5h3M1038.5 940v3M1037 955.5h3M1038.5 954v3M1063 935.5h3M1064.5 934v3M1036 963.5h3M1037.5 962v3M1040 957.5h3M1041.5 956v3M1044 965.5h3M1045.5 964v3M1032 956.5h3M1033.5 955v3M1042 954.5h3M1043.5 953v3M1032 937.5h3M1033.5 936v3M1013 937.5h3M1014.5 936v3M1011 934.5h3M1012.5 933v3M1006 941.5h3M1007.5 940v3M1007 930.5h3M1008.5 929v3M1004 932.5h3M1005.5 931v3M1015 934.5h3M1016.5 933v3M1032 950.5h3M1033.5 949v3M1029 939.5h3M1030.5 938v3M1054 909.5h3M1055.5 908v3M1052 907.5h3M1053.5 906v3M1032 921.5h3M1033.5 920v3M1031 931.5h3M1032.5 930v3M1038 911.5h3M1039.5 910v3M1015 933.5h3M1016.5 932v3M1018 946.5h3M1019.5 945v3M1023 952.5h3M1024.5 951v3M1020 967.5h3M1021.5 966v3M1016 974.5h3M1017.5 973v3M1009 978.5h3M1010.5 977v3M1030 971.5h3M1031.5 970v3M1028 972.5h3M1029.5 971v3M1022 953.5h3M1023.5 952v3M1032 955.5h3M1033.5 954v3M1037 959.5h3M1038.5 958v3M1049 957.5h3M1050.5 956v3M1042 951.5h3M1043.5 950v3M1039 962.5h3M1040.5 961v3M1033 957.5h3M1034.5 956v3M1039 953.5h3M1040.5 952v3M1025 957.5h3M1026.5 956v3M1027 962.5h3M1028.5 961v3M1036 948.5h3M1037.5 947v3M1032 946.5h3M1033.5 945v3M1044 958.5h3M1045.5 957v3M1047 949.5h3M1048.5 948v3M1069 939.5h3M1070.5 938v3M1075 937.5h3M1076.5 936v3M1077 933.5h3M1078.5 932v3M1043 966.5h3M1044.5 965v3M1047 959.5h3M1048.5 958v3M1037 958.5h3M1038.5 957v3M1034 985.5h3M1035.5 984v3M1044 959.5h3M1045.5 958v3M1056 938.5h3M1057.5 937v3M1054 935.5h3M1055.5 934v3M1050 956.5h3M1051.5 955v3M1032 940.5h3M1033.5 939v3M1037 959.5h3M1038.5 958v3M1045 950.5h3M1046.5 949v3M1049 959.5h3M1050.5 958v3M1046 932.5h3M1047.5 931v3M1049 949.5h3M1050.5 948v3M1020 964.5h3M1021.5 963v3M1026 966.5h3M1027.5 965v3M1014 998.5h3M1015.5 997v3M1016 988.5h3M1017.5 987v3M1013 995.5h3M1014.5 994v3M1006 1004.5h3M1007.5 1003v3M1003 1002.5h3M1004.5 1001v3M999 998.5h3M1000.5 997v3M1016 974.5h3M1017.5 973v3M1012 979.5h3M1013.5 978v3M1024 982.5h3M1025.5 981v3M1024 969.5h3M1025.5 968v3M1029 979.5h3M1030.5 978v3M1007 976.5h3M1008.5 975v3M1012 993.5h3M1013.5 992v3M1011 992.5h3M1012.5 991v3M1008 995.5h3M1009.5 994v3M1004 981.5h3M1005.5 980v3M1002 976.5h3M1003.5 975v3M1013 965.5h3M1014.5 964v3M1023 955.5h3M1024.5 954v3M1028 950.5h3M1029.5 949v3M1027 977.5h3M1028.5 976v3M1028 972.5h3M1029.5 971v3M1010 980.5h3M1011.5 979v3M1014 977.5h3M1015.5 976v3M1017 976.5h3M1018.5 975v3M1024 991.5h3M1025.5 990v3M1029 1006.5h3M1030.5 1005v3M1028 1003.5h3M1029.5 1002v3M1025 1001.5h3M1026.5 1000v3M1007 1001.5h3M1008.5 1000v3M1010 999.5h3M1011.5 998v3M1012 990.5h3M1013.5 989v3M1012 1002.5h3M1013.5 1001v3M985 1031.5h3M986.5 1030v3M973 1026.5h3M974.5 1025v3M1005 1037.5h3M1006.5 1036v3M1011 1003.5h3M1012.5 1002v3M1009 1013.5h3M1010.5 1012v3M988 1023.5h3M989.5 1022v3M996 1034.5h3M997.5 1033v3M994 1033.5h3M995.5 1032v3M993 1040.5h3M994.5 1039v3M992 1041.5h3M993.5 1040v3M997 1011.5h3M998.5 1010v3M1008 1018.5h3M1009.5 1017v3M1010 1011.5h3M1011.5 1010v3M1012 1024.5h3M1013.5 1023v3M1033 1042.5h3M1034.5 1041v3M1012 1030.5h3M1013.5 1029v3M1029 1043.5h3M1030.5 1042v3M1037 1055.5h3M1038.5 1054v3M1027 1045.5h3M1028.5 1044v3M1018 1056.5h3M1019.5 1055v3M1007 1032.5h3M1008.5 1031v3M1031 1066.5h3M1032.5 1065v3M1021 1055.5h3M1022.5 1054v3M1014 1057.5h3M1015.5 1056v3M1016 1073.5h3M1017.5 1072v3M1029 1056.5h3M1030.5 1055v3M1030 1048.5h3M1031.5 1047v3M1026 1050.5h3M1027.5 1049v3M1019 1056.5h3M1020.5 1055v3M996 1034.5h3M997.5 1033v3M993 1024.5h3M994.5 1023v3M997 1032.5h3M998.5 1031v3M1002 1045.5h3M1003.5 1044v3M998 1040.5h3M999.5 1039v3M1000 1019.5h3M1001.5 1018v3M1007 1035.5h3M1008.5 1034v3M1008 1041.5h3M1009.5 1040v3M1011 1059.5h3M1012.5 1058v3M1019 1071.5h3M1020.5 1070v3M1033 1075.5h3M1034.5 1074v3M1028 1068.5h3M1029.5 1067v3M1019 1060.5h3M1020.5 1059v3M1039 1084.5h3M1040.5 1083v3M1043 1084.5h3M1044.5 1083v3M1048 1098.5h3M1049.5 1097v3M1032 1111.5h3M1033.5 1110v3M1036 1098.5h3M1037.5 1097v3M1034 1114.5h3M1035.5 1113v3M1030 1098.5h3M1031.5 1097v3M1021 1089.5h3M1022.5 1088v3M1015 1108.5h3M1016.5 1107v3M1038 1106.5h3M1039.5 1105v3M1038 1118.5h3M1039.5 1117v3M1041 1106.5h3M1042.5 1105v3M1044 1125.5h3M1045.5 1124v3M1041 1136.5h3M1042.5 1135v3M1037 1135.5h3M1038.5 1134v3M1047 1134.5h3M1048.5 1133v3M1045 1110.5h3M1046.5 1109v3M1036 1113.5h3M1037.5 1112v3M1043 1107.5h3M1044.5 1106v3M1044 1132.5h3M1045.5 1131v3M1027 1132.5h3M1028.5 1131v3M1026 1152.5h3M1027.5 1151v3M1016 1143.5h3M1017.5 1142v3M1007 1136.5h3M1008.5 1135v3M1013 1133.5h3M1014.5 1132v3M1018 1129.5h3M1019.5 1128v3M1033 1116.5h3M1034.5 1115v3M1014 1108.5h3M1015.5 1107v3M1008 1108.5h3M1009.5 1107v3M1007 1098.5h3M1008.5 1097v3M997 1106.5h3M998.5 1105v3M1015 1108.5h3M1016.5 1107v3M1015 1119.5h3M1016.5 1118v3M1015 1122.5h3M1016.5 1121v3M1023 1122.5h3M1024.5 1121v3M1000 1122.5h3M1001.5 1121v3M995 1123.5h3M996.5 1122v3M993 1133.5h3M994.5 1132v3M1018 1134.5h3M1019.5 1133v3M1008 1121.5h3M1009.5 1120v3M987 1106.5h3M988.5 1105v3M995 1088.5h3M996.5 1087v3M980 1090.5h3M981.5 1089v3M993 1081.5h3M994.5 1080v3M993 1083.5h3M994.5 1082v3M1012 1098.5h3M1013.5 1097v3M1023 1131.5h3M1024.5 1130v3M1025 1135.5h3M1026.5 1134v3M1023 1147.5h3M1024.5 1146v3M1009 1141.5h3M1010.5 1140v3M1030 1142.5h3M1031.5 1141v3M993 1151.5h3M994.5 1150v3M1000 1152.5h3M1001.5 1151v3M997 1149.5h3M998.5 1148v3M1009 1140.5h3M1010.5 1139v3M1012 1147.5h3M1013.5 1146v3M1028 1139.5h3M1029.5 1138v3M1034 1129.5h3M1035.5 1128v3M1029 1143.5h3M1030.5 1142v3M1018 1149.5h3M1019.5 1148v3M1028 1129.5h3M1029.5 1128v3M1040 1116.5h3M1041.5 1115v3M1037 1107.5h3M1038.5 1106v3M1032 1112.5h3M1033.5 1111v3M1025 1116.5h3M1026.5 1115v3M1025 1123.5h3M1026.5 1122v3M998 1123.5h3M999.5 1122v3M1002 1135.5h3M1003.5 1134v3M1006 1107.5h3M1007.5 1106v3M1019 1112.5h3M1020.5 1111v3M1036 1097.5h3M1037.5 1096v3M1059 1096.5h3M1060.5 1095v3M1061 1095.5h3M1062.5 1094v3M1045 1092.5h3M1046.5 1091v3M1050 1107.5h3M1051.5 1106v3M1053 1124.5h3M1054.5 1123v3M1034 1111.5h3M1035.5 1110v3M1026 1099.5h3M1027.5 1098v3M1032 1088.5h3M1033.5 1087v3M1028 1092.5h3M1029.5 1091v3M1026 1094.5h3M1027.5 1093v3M1034 1095.5h3M1035.5 1094v3M1025 1105.5h3M1026.5 1104v3M1040 1082.5h3M1041.5 1081v3M1049 1084.5h3M1050.5 1083v3M1040 1063.5h3M1041.5 1062v3M1024 1067.5h3M1025.5 1066v3M1031 1063.5h3M1032.5 1062v3M1047 1079.5h3M1048.5 1078v3M1029 1067.5h3M1030.5 1066v3M1038 1075.5h3M1039.5 1074v3M1023 1077.5h3M1024.5 1076v3M1032 1086.5h3M1033.5 1085v3M1026 1089.5h3M1027.5 1088v3M1034 1089.5h3M1035.5 1088v3M1013 1077.5h3M1014.5 1076v3M1020 1079.5h3M1021.5 1078v3M1029 1076.5h3M1030.5 1075v3M1027 1066.5h3M1028.5 1065v3M1032 1061.5h3M1033.5 1060v3M1030 1081.5h3M1031.5 1080v3M1044 1102.5h3M1045.5 1101v3M1047 1102.5h3M1048.5 1101v3M1041 1115.5h3M1042.5 1114v3M1029 1101.5h3M1030.5 1100v3M1042 1097.5h3M1043.5 1096v3M1044 1094.5h3M1045.5 1093v3M1043 1083.5h3M1044.5 1082v3M1049 1058.5h3M1050.5 1057v3M1034 1050.5h3M1035.5 1049v3M1023 1040.5h3M1024.5 1039v3M1034 1051.5h3M1035.5 1050v3M1040 1031.5h3M1041.5 1030v3M1033 1044.5h3M1034.5 1043v3M1024 1024.5h3M1025.5 1023v3M1028 1018.5h3M1029.5 1017v3M1007 1017.5h3M1008.5 1016v3M994 1022.5h3M995.5 1021v3M985 1035.5h3M986.5 1034v3M982 1025.5h3M983.5 1024v3M1001 1018.5h3M1002.5 1017v3M1009 1030.5h3M1010.5 1029v3M995 1033.5h3M996.5 1032v3M994 1024.5h3M995.5 1023v3M1004 1011.5h3M1005.5 1010v3M1001 1003.5h3M1002.5 1002v3M984 992.5h3M985.5 991v3M1002 1004.5h3M1003.5 1003v3M995 1008.5h3M996.5 1007v3M1004 975.5h3M1005.5 974v3M1008 997.5h3M1009.5 996v3M1024 1010.5h3M1025.5 1009v3M1018 1023.5h3M1019.5 1022v3M1025 1033.5h3M1026.5 1032v3M1023 1007.5h3M1024.5 1006v3M1024 988.5h3M1025.5 987v3M1013 997.5h3M1014.5 996v3M1030 972.5h3M1031.5 971v3M1044 981.5h3M1045.5 980v3M1054 967.5h3M1055.5 966v3M1067 998.5h3M1068.5 997v3M1064 994.5h3M1065.5 993v3M1069 991.5h3M1070.5 990v3M1062 1003.5h3M1063.5 1002v3M1067 982.5h3M1068.5 981v3M1069 977.5h3M1070.5 976v3M1079 982.5h3M1080.5 981v3M1065 996.5h3M1066.5 995v3M1077 998.5h3M1078.5 997v3M1075 988.5h3M1076.5 987v3M1079 1002.5h3M1080.5 1001v3M1058 1004.5h3M1059.5 1003v3M1058 983.5h3M1059.5 982v3M1079 987.5h3M1080.5 986v3M1085 974.5h3M1086.5 973v3M1059 984.5h3M1060.5 983v3M1057 972.5h3M1058.5 971v3M1052 966.5h3M1053.5 965v3M1040 974.5h3M1041.5 973v3M1031 979.5h3M1032.5 978v3M1037 971.5h3M1038.5 970v3M1039 963.5h3M1040.5 962v3M1036 984.5h3M1037.5 983v3M1042 979.5h3M1043.5 978v3M1052 972.5h3M1053.5 971v3M1056 955.5h3M1057.5 954v3M1045 951.5h3M1046.5 950v3M1032 975.5h3M1033.5 974v3M1036 995.5h3M1037.5 994v3M1023 1006.5h3M1024.5 1005v3M1037 1012.5h3M1038.5 1011v3M1035 1000.5h3M1036.5 999v3M1033 1023.5h3M1034.5 1022v3M1027 1005.5h3M1028.5 1004v3M1030 1001.5h3M1031.5 1000v3M1048 994.5h3M1049.5 993v3M1051 982.5h3M1052.5 981v3M1036 995.5h3M1037.5 994v3M1052 999.5h3M1053.5 998v3M1040 973.5h3M1041.5 972v3M1022 956.5h3M1023.5 955v3M1003 960.5h3M1004.5 959v3M1021 964.5h3M1022.5 963v3M1022 941.5h3M1023.5 940v3M1033 918.5h3M1034.5 917v3M1032 914.5h3M1033.5 913v3M1036 923.5h3M1037.5 922v3M1035 925.5h3M1036.5 924v3M1036 925.5h3M1037.5 924v3M1038 917.5h3M1039.5 916v3M1037 901.5h3M1038.5 900v3M1030 937.5h3M1031.5 936v3M1034 926.5h3M1035.5 925v3M1018 921.5h3M1019.5 920v3M1028 920.5h3M1029.5 919v3M1026 934.5h3M1027.5 933v3M1017 928.5h3M1018.5 927v3M1018 953.5h3M1019.5 952v3M1000 944.5h3M1001.5 943v3M1030 931.5h3M1031.5 930v3M1030 925.5h3M1031.5 924v3M1028 936.5h3M1029.5 935v3M1014 940.5h3M1015.5 939v3M1034 933.5h3M1035.5 932v3M1042 932.5h3M1043.5 931v3M1040 919.5h3M1041.5 918v3M1047 933.5h3M1048.5 932v3M1051 928.5h3M1052.5 927v3M1040 943.5h3M1041.5 942v3M1028 956.5h3M1029.5 955v3M1029 950.5h3M1030.5 949v3M1031 922.5h3M1032.5 921v3M1017 922.5h3M1018.5 921v3M1026 928.5h3M1027.5 927v3M1039 934.5h3M1040.5 933v3M1025 930.5h3M1026.5 929v3M1027 960.5h3M1028.5 959v3M1017 977.5h3M1018.5 976v3M1020 989.5h3M1021.5 988v3M1020 997.5h3M1021.5 996v3M1013 1011.5h3M1014.5 1010v3M1001 995.5h3M1002.5 994v3M996 1010.5h3M997.5 1009v3M991 995.5h3M992.5 994v3M983 991.5h3M984.5 990v3M983 990.5h3M984.5 989v3M979 987.5h3M980.5 986v3M981 991.5h3M982.5 990v3M989 997.5h3M990.5 996v3M972 1004.5h3M973.5 1003v3M971 1000.5h3M972.5 999v3M962 1013.5h3M963.5 1012v3M968 1005.5h3M969.5 1004v3M986 1004.5h3M987.5 1003v3M1001 1003.5h3M1002.5 1002v3M987 989.5h3M988.5 988v3M995 1012.5h3M996.5 1011v3M1000 1022.5h3M1001.5 1021v3M990 1030.5h3M991.5 1029v3M989 1043.5h3M990.5 1042v3M995 1054.5h3M996.5 1053v3M986 1026.5h3M987.5 1025v3M990 1043.5h3M991.5 1042v3M996 1038.5h3M997.5 1037v3M994 1034.5h3M995.5 1033v3M1000 1038.5h3M1001.5 1037v3M1004 1059.5h3M1005.5 1058v3M1026 1081.5h3M1027.5 1080v3M1037 1097.5h3M1038.5 1096v3M1037 1090.5h3M1038.5 1089v3M1028 1082.5h3M1029.5 1081v3M1020 1077.5h3M1021.5 1076v3M1027 1094.5h3M1028.5 1093v3M1007 1083.5h3M1008.5 1082v3M1005 1079.5h3M1006.5 1078v3M995 1063.5h3M996.5 1062v3M1003 1036.5h3M1004.5 1035v3M1032 1042.5h3M1033.5 1041v3M1029 1047.5h3M1030.5 1046v3M1031 1070.5h3M1032.5 1069v3M1027 1073.5h3M1028.5 1072v3M1041 1066.5h3M1042.5 1065v3M1057 1080.5h3M1058.5 1079v3M1052 1076.5h3M1053.5 1075v3M1057 1065.5h3M1058.5 1064v3M1057 1051.5h3M1058.5 1050v3M1068 1071.5h3M1069.5 1070v3M1072 1062.5h3M1073.5 1061v3M1057 1058.5h3M1058.5 1057v3M1062 1047.5h3M1063.5 1046v3M1054 1076.5h3M1055.5 1075v3M1046 1069.5h3M1047.5 1068v3M1053 1105.5h3M1054.5 1104v3M1032 1096.5h3M1033.5 1095v3M1043 1087.5h3M1044.5 1086v3M1037 1112.5h3M1038.5 1111v3M1030 1101.5h3M1031.5 1100v3M1038 1077.5h3M1039.5 1076v3M1046 1068.5h3M1047.5 1067v3M1029 1053.5h3M1030.5 1052v3M1022 1067.5h3M1023.5 1066v3M1023 1084.5h3M1024.5 1083v3M1029 1074.5h3M1030.5 1073v3M1010 1091.5h3M1011.5 1090v3M1016 1118.5h3M1017.5 1117v3M1000 1126.5h3M1001.5 1125v3M999 1114.5h3M1000.5 1113v3M989 1128.5h3M990.5 1127v3M974 1114.5h3M975.5 1113v3M984 1112.5h3M985.5 1111v3M983 1092.5h3M984.5 1091v3M1005 1104.5h3M1006.5 1103v3M1005 1116.5h3M1006.5 1115v3M998 1103.5h3M999.5 1102v3M1003 1099.5h3M1004.5 1098v3M1023 1103.5h3M1024.5 1102v3M1012 1109.5h3M1013.5 1108v3M1023 1129.5h3M1024.5 1128v3M1016 1126.5h3M1017.5 1125v3M1007 1099.5h3M1008.5 1098v3M1002 1112.5h3M1003.5 1111v3M1007 1094.5h3M1008.5 1093v3M1016 1099.5h3M1017.5 1098v3M1031 1108.5h3M1032.5 1107v3M1040 1096.5h3M1041.5 1095v3M1045 1084.5h3M1046.5 1083v3M1045 1089.5h3M1046.5 1088v3M1041 1103.5h3M1042.5 1102v3M1047 1115.5h3M1048.5 1114v3M1038 1112.5h3M1039.5 1111v3M1032 1099.5h3M1033.5 1098v3M1031 1094.5h3M1032.5 1093v3M1034 1130.5h3M1035.5 1129v3M1025 1131.5h3M1026.5 1130v3M1022 1113.5h3M1023.5 1112v3M1012 1110.5h3M1013.5 1109v3M1008 1125.5h3M1009.5 1124v3M988 1129.5h3M989.5 1128v3M996 1119.5h3M997.5 1118v3M1005 1113.5h3M1006.5 1112v3M1010 1110.5h3M1011.5 1109v3M1004 1079.5h3M1005.5 1078v3M1011 1049.5h3M1012.5 1048v3M1012 1057.5h3M1013.5 1056v3M1007 1050.5h3M1008.5 1049v3M1028 1076.5h3M1029.5 1075v3M1040 1074.5h3M1041.5 1073v3M1017 1052.5h3M1018.5 1051v3M1009 1048.5h3M1010.5 1047v3M1012 1044.5h3M1013.5 1043v3M1009 1084.5h3M1010.5 1083v3M1014 1080.5h3M1015.5 1079v3M1025 1074.5h3M1026.5 1073v3M1013 1092.5h3M1014.5 1091v3M1012 1086.5h3M1013.5 1085v3M998 1083.5h3M999.5 1082v3M977 1054.5h3M978.5 1053v3M985 1059.5h3M986.5 1058v3M967 1057.5h3M968.5 1056v3M967 1050.5h3M968.5 1049v3M966 1030.5h3M967.5 1029v3M979 1041.5h3M980.5 1040v3M990 1040.5h3M991.5 1039v3M995 1031.5h3M996.5 1030v3M1004 1032.5h3M1005.5 1031v3M1005 1031.5h3M1006.5 1030v3M1001 1029.5h3M1002.5 1028v3M1010 1057.5h3M1011.5 1056v3M1035 1056.5h3M1036.5 1055v3M1018 1067.5h3M1019.5 1066v3" stroke="#f40000" stroke-width="1.2" fill="none" shape-rendering="crispEdges"/><path d="M1261.5 1140 V1150 M1307.5 1140 V1150 M1261 1145.5 H1308" stroke="#000" stroke-width="1" shape-rendering="crispEdges"/><text x="1284" y="1138" font-size="11" text-anchor="middle" font-family="DejaVu Sans Condensed,DejaVu Sans,sans-serif" font-stretch="condensed" fill="#000">1 m</text></svg>
</div>
</body></html>
